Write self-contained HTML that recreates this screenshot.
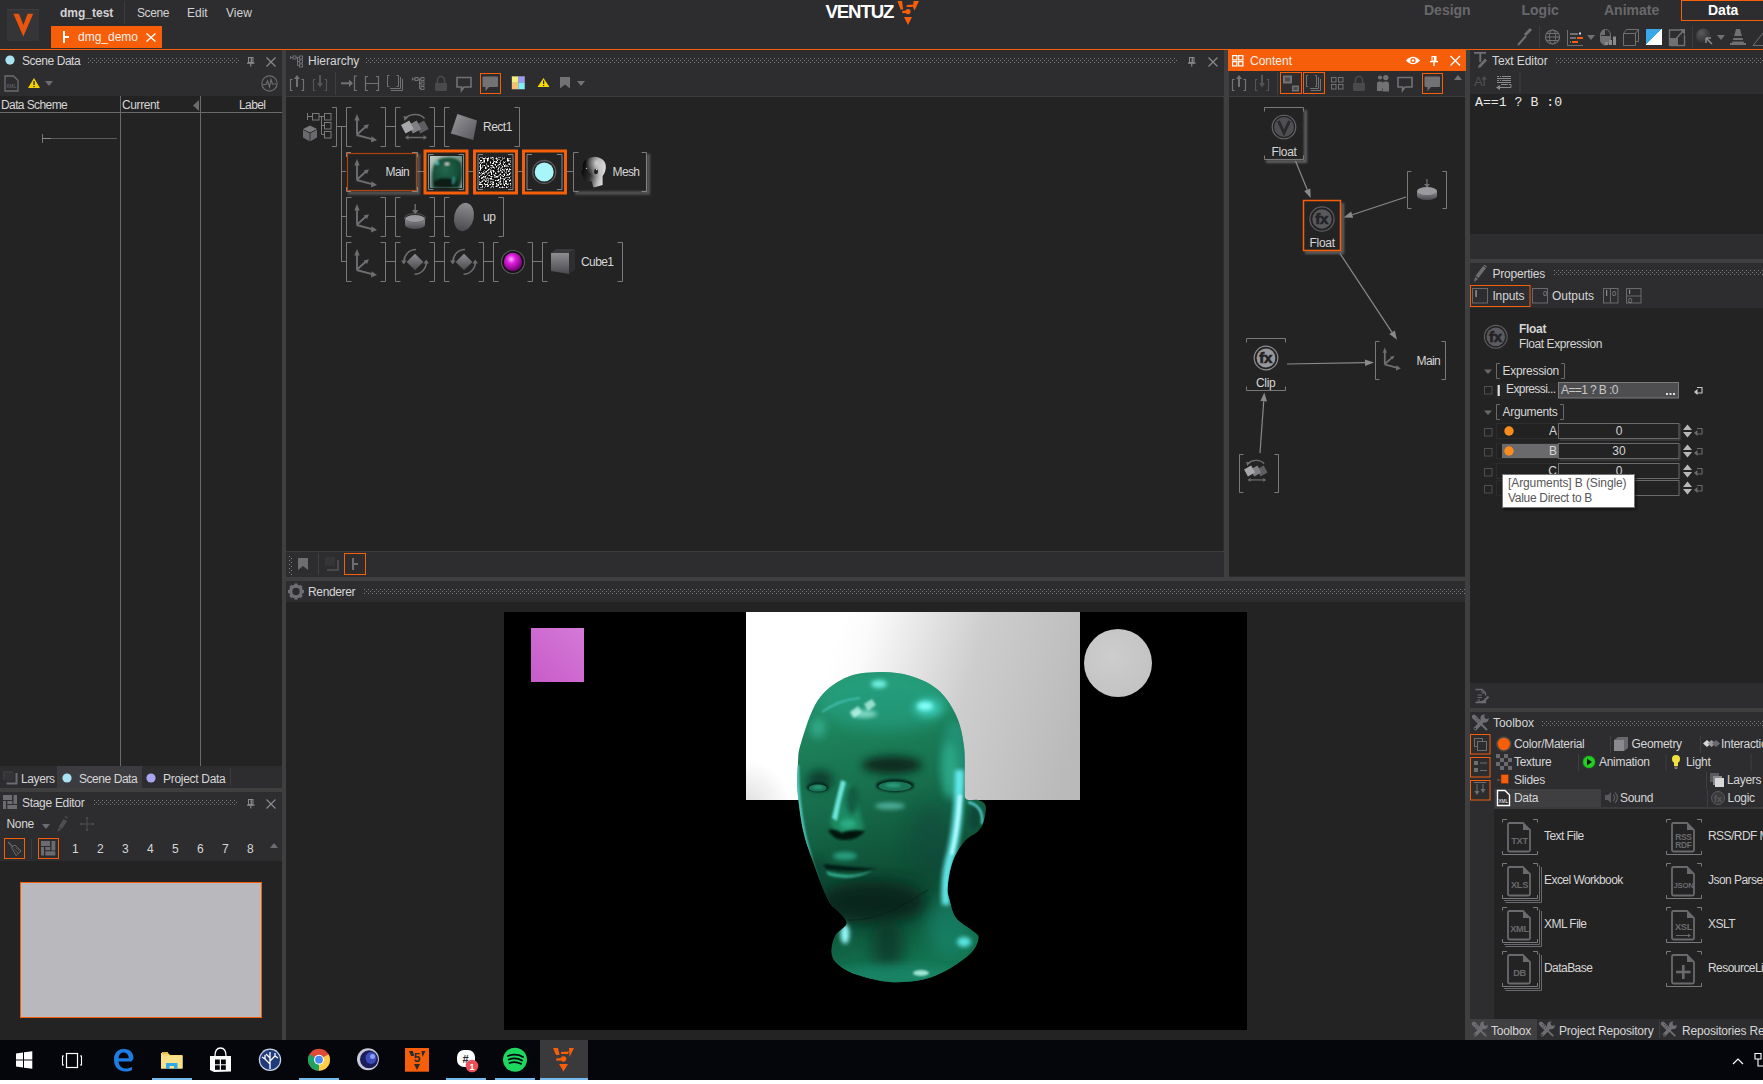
<!DOCTYPE html>
<html><head><meta charset="utf-8">
<style>
*{box-sizing:border-box;margin:0;padding:0}
html,body{width:1763px;height:1084px;overflow:hidden;background:#fff}
body{position:relative;font-family:"Liberation Sans",sans-serif;font-size:12px;color:#d6d6d6}
.a{position:absolute}
.t{position:absolute;white-space:nowrap;line-height:16px;font-size:12px;color:#d6d6d6}
svg{position:absolute;overflow:visible}
</style></head><body>
<svg width="0" height="0" style="left:0;top:0"><defs>
<pattern id="dotp" x="0" y="0" width="4" height="4" patternUnits="userSpaceOnUse"><rect x="0" y="0" width="1" height="1" fill="#7c7c7c"/><rect x="2" y="2" width="1" height="1" fill="#7c7c7c"/></pattern>
<linearGradient id="gGray" x1="0" y1="0" x2="1" y2="1"><stop offset="0" stop-color="#9a9a9e"/><stop offset="1" stop-color="#55555a"/></linearGradient>
<linearGradient id="gGray2" x1="0" y1="0" x2="0" y2="1"><stop offset="0" stop-color="#8e8e92"/><stop offset="1" stop-color="#4a4a4e"/></linearGradient>
<radialGradient id="gSphMag" cx="0.4" cy="0.35" r="0.65"><stop offset="0" stop-color="#ffb0ff"/><stop offset="0.35" stop-color="#e020e0"/><stop offset="1" stop-color="#700070"/></radialGradient>
<filter id="blurS" x="-20%" y="-20%" width="140%" height="140%"><feGaussianBlur stdDeviation="1.2"/></filter></defs></svg>
<div class="a" style="left:0px;top:0px;width:1763px;height:1080px;background:#2d2d30;"></div>
<div class="a" style="left:0px;top:49px;width:1763px;height:1px;background:#f65e0a;"></div>
<div class="a" style="left:0px;top:96px;width:282px;height:670px;background:#232323;"></div>
<div class="a" style="left:0px;top:788px;width:282px;height:4px;background:#3f3f3f;"></div>
<div class="a" style="left:0px;top:861px;width:282px;height:179px;background:#232323;"></div>
<div class="a" style="left:282px;top:50px;width:4px;height:990px;background:#3f3f3f;"></div>
<div class="a" style="left:286px;top:96px;width:938px;height:1px;background:#3c3c3e;"></div>
<div class="a" style="left:286px;top:97px;width:937px;height:454px;background:#232323;"></div>
<div class="a" style="left:286px;top:551px;width:938px;height:1px;background:#3c3c3e;"></div>
<div class="a" style="left:1224px;top:50px;width:5px;height:527px;background:#3f3f3f;"></div>
<div class="a" style="left:1228px;top:50px;width:238px;height:21px;background:#f65e0a;"></div>
<div class="a" style="left:1229px;top:96px;width:237px;height:1px;background:#3c3c3e;"></div>
<div class="a" style="left:1229px;top:97px;width:236px;height:479px;background:#232323;"></div>
<div class="a" style="left:286px;top:577px;width:1180px;height:4px;background:#3f3f3f;"></div>
<div class="a" style="left:1465px;top:50px;width:5px;height:990px;background:#3f3f3f;"></div>
<div class="a" style="left:286px;top:602px;width:1179px;height:438px;background:#232323;"></div>
<div class="a" style="left:504px;top:612px;width:743px;height:418px;background:#000;"></div>
<div class="a" style="left:1470px;top:94px;width:293px;height:140px;background:#232323;"></div>
<div class="a" style="left:1470px;top:259px;width:293px;height:4px;background:#3f3f3f;"></div>
<div class="a" style="left:1470px;top:308px;width:293px;height:375px;background:#232323;"></div>
<div class="a" style="left:1470px;top:708px;width:293px;height:4px;background:#3f3f3f;"></div>
<div class="a" style="left:1494px;top:809px;width:269px;height:210px;background:#232323;"></div>
<div class="a" style="left:0px;top:1040px;width:1763px;height:40px;background:#04060b;"></div>
<div class="a" style="left:7px;top:9px;width:32px;height:32px;background:#353537;border-top:1px solid #3d3d3f"></div>
<svg style="left:0px;top:0px;" width="50" height="45" viewBox="0 0 50 45"><polygon points="13.4,13.8 18.9,13.8 23.4,25 27.6,13.8 33.2,13.8 23.3,36.4" fill="#e8550f"/></svg>
<div class="t" style="left:60px;top:4.84px;font-size:12px;line-height:16px;color:#d2d2d2;font-weight:700;">dmg_test</div>
<div class="a" style="left:124px;top:1px;width:1px;height:23px;background:#3c3c40;"></div>
<div class="t" style="left:137px;top:4.84px;font-size:12px;line-height:16px;color:#d2d2d2;font-weight:400;letter-spacing:-0.4px">Scene</div>
<div class="t" style="left:187px;top:4.84px;font-size:12px;line-height:16px;color:#d2d2d2;font-weight:400;">Edit</div>
<div class="t" style="left:226px;top:4.84px;font-size:12px;line-height:16px;color:#d2d2d2;font-weight:400;">View</div>
<div class="a" style="left:51px;top:26px;width:111px;height:22px;background:#f65e0a;"></div>
<div class="a" style="left:63px;top:31px;width:2px;height:12px;background:#fff;"></div>
<div class="a" style="left:65px;top:36px;width:4px;height:2px;background:#fff;"></div>
<div class="t" style="left:78px;top:28.54px;font-size:12px;line-height:16px;color:#f6efe8;font-weight:400;">dmg_demo</div>
<svg style="left:146px;top:33px;" width="10" height="9" viewBox="0 0 10 9"><path d="M0.5,0.5 L9.5,8.5 M9.5,0.5 L0.5,8.5" stroke="#fff" stroke-width="1.3"/></svg>
<div class="t" style="left:825.5px;top:-0.04px;font-size:18.6px;line-height:24px;color:#ffffff;font-weight:700;letter-spacing:-1.1px">VENTUZ</div>
<svg style="left:896px;top:0px;" width="24" height="26" viewBox="0 0 24 26"><polygon points="1.5,1 6,1 7.2,9.5 4.5,9.5" fill="#f65e0a"/><polygon points="17.5,1 23,1 18.5,10.5 17,7" fill="#f65e0a"/><polygon points="10.7,5 17.5,4.5 16.5,7 10.5,7" fill="#f65e0a"/><circle cx="12" cy="11.6" r="2.6" fill="#f65e0a"/><polygon points="6,11 10,10.5 10,13 6.5,13.2" fill="#f65e0a"/><polygon points="8,17 16,17 12,25" fill="#f65e0a"/></svg>
<div class="t" style="left:1424px;top:1.15px;font-size:14px;line-height:18px;color:#68686b;font-weight:700;">Design</div>
<div class="t" style="left:1521.5px;top:1.15px;font-size:14px;line-height:18px;color:#68686b;font-weight:700;">Logic</div>
<div class="t" style="left:1604px;top:1.15px;font-size:14px;line-height:18px;color:#68686b;font-weight:700;">Animate</div>
<div class="a" style="left:1681px;top:0px;width:90px;height:21px;background:transparent;border:1.3px solid #f65e0a"></div>
<div class="t" style="left:1708px;top:0.75px;font-size:14px;line-height:18px;color:#ffffff;font-weight:700;">Data</div>
<svg style="left:0px;top:0px;" width="1763" height="50" viewBox="0 0 1763 50"><path d="M1518,45 L1526,36" stroke="#707073" stroke-width="2"/><path d="M1524,34 L1530,28 L1532,30 L1526,36 Z" fill="#707073"/><rect x="1539" y="26" width="1" height="22" fill="#3c3c40"/><circle cx="1552.5" cy="37" r="7" fill="none" stroke="#707073" stroke-width="1.2"/><ellipse cx="1552.5" cy="37" rx="3.2" ry="7" fill="none" stroke="#707073" stroke-width="1"/><path d="M1545.5,37 H1559.5 M1546.5,33.5 H1558.5 M1546.5,40.5 H1558.5" stroke="#707073" stroke-width="1"/><path d="M1567.5,30 V45.5 H1583" stroke="#707073" stroke-width="1" fill="none"/><rect x="1570" y="33" width="8" height="2" fill="#707073"/><rect x="1579" y="32.5" width="2" height="2" fill="#ddd"/><rect x="1570" y="37" width="6" height="2" fill="#707073"/><rect x="1577" y="37" width="6" height="2" fill="#f65e0a"/><rect x="1570" y="41" width="1" height="2" fill="#707073"/><rect x="1572" y="41" width="6" height="2" fill="#f65e0a"/><polygon points="1587,35 1595,35 1591,40" fill="#707073"/><path d="M1600.5,35 a5,5.5 0 0 1 10,0 V40 a5,5 0 0 1 -10,0 Z" fill="none" stroke="#707073" stroke-width="1"/><path d="M1600.5,35 a5,5.5 0 0 1 4.5,-5.5 V35 Z M1600.5,36 H1610.5 V40 a5,5 0 0 1 -10,0 Z" fill="#707073"/><rect x="1605" y="42" width="3" height="3" fill="#8a8a8d"/><rect x="1609" y="40" width="3" height="5" fill="#8a8a8d"/><rect x="1613" y="36.5" width="3" height="8.5" fill="#8a8a8d"/><path d="M1623.5,33.5 H1635.5 V45.5 H1623.5 Z M1626.5,29.5 H1638.5 V41.5 H1635.5 M1623.5,33.5 L1626.5,29.5 M1635.5,33.5 L1638.5,29.5" stroke="#707073" stroke-width="1" fill="none"/><rect x="1646" y="29" width="16" height="16" fill="#3aa8e8"/><polygon points="1662,29 1662,45 1646,45" fill="#fff"/><path d="M1646,45 L1662,29" stroke="#fff" stroke-width="1"/><path d="M1669.5,45.5 V30 H1680 M1684.5,35 V45.5 H1669.5" stroke="#707073" stroke-width="1.4" fill="none"/><rect x="1670" y="38" width="8" height="7" fill="#707073"/><path d="M1674,41 L1684,30" stroke="#707073" stroke-width="1.5"/><polygon points="1679,29 1685,29 1685,35" fill="#707073"/><rect x="1692" y="26" width="1" height="22" fill="#3c3c40"/><defs><radialGradient id="gSph" cx="0.35" cy="0.3" r="0.7"><stop offset="0" stop-color="#5a5a5d"/><stop offset="1" stop-color="#2e2e31"/></radialGradient></defs><circle cx="1703.5" cy="36" r="7.5" fill="url(#gSph)"/><path d="M1706,38 L1712,44 M1706,38 V43 M1706,38 H1711" stroke="#8a8a8d" stroke-width="1.5"/><polygon points="1717,35 1725,35 1721,40" fill="#707073"/><polygon points="1735,33 1741,33 1744,43 1746,43 1746,45 1730,45 1730,43 1732,43" fill="#707073"/><rect x="1733" y="36" width="10" height="2" fill="#2d2d30"/><rect x="1732" y="40" width="12" height="1.5" fill="#2d2d30"/><polygon points="1736,29 1740,29 1741,33 1735,33" fill="#707073"/><path d="M1753,45.5 H1763 M1753,45.5 L1763,33" stroke="#707073" stroke-width="1"/></svg>
<svg style="left:0px;top:50px;" width="20" height="22" viewBox="0 0 20 22"><circle cx="10" cy="10.1" r="4.6" fill="#a9e3f1"/></svg>
<div class="t" style="left:22px;top:52.84px;font-size:12px;line-height:16px;color:#d6d6d6;font-weight:400;letter-spacing:-0.45px">Scene Data</div>
<svg style="left:88px;top:58px" width="152" height="5"><rect width="152" height="5" fill="url(#dotp)"/></svg>
<svg style="left:245.5px;top:57px;" width="9" height="10" viewBox="0 0 9 10"><rect x="2.5" y="0.5" width="4.5" height="5" fill="none" stroke="#8a8a8d" stroke-width="1"/><rect x="4.6" y="1" width="1.3" height="4.5" fill="#8a8a8d"/><rect x="1" y="5.5" width="7.5" height="1.3" fill="#8a8a8d"/><rect x="4.2" y="6.5" width="1.1" height="3" fill="#8a8a8d"/></svg>
<svg style="left:266px;top:57px;" width="10" height="10" viewBox="0 0 10 10"><path d="M0.5,0.5 L9.5,9.5 M9.5,0.5 L0.5,9.5" stroke="#8a8a8d" stroke-width="1.2"/></svg>
<svg style="left:4px;top:75px;" width="15" height="17" viewBox="0 0 15 17"><path d="M1,1 H9.5 L14,5.5 V16 H1 Z" fill="none" stroke="#6c6c70" stroke-width="1.3"/><text x="2" y="12.5" font-size="5" fill="#6c6c70" font-family="Liberation Sans">XML</text></svg>
<svg style="left:28px;top:78px;" width="12" height="10" viewBox="0 0 12 10"><polygon points="6,0 12,10 0,10" fill="#f5d000"/><rect x="5.4" y="3" width="1.3" height="4" fill="#222"/><rect x="5.4" y="8" width="1.3" height="1.2" fill="#222"/></svg>
<svg style="left:45px;top:81px;" width="8" height="5" viewBox="0 0 8 5"><polygon points="0,0 8,0 4,5" fill="#6c6c70"/></svg>
<svg style="left:261px;top:75px;" width="17" height="17" viewBox="0 0 17 17"><circle cx="8.5" cy="8.5" r="7.6" fill="none" stroke="#6c6c70" stroke-width="1.2"/><path d="M2,9.5 H5 L6.5,6 L8.5,12 L10,4.5 L11.5,9 H15" fill="none" stroke="#6c6c70" stroke-width="1.2"/></svg>
<div class="t" style="left:1px;top:96.84px;font-size:12px;line-height:16px;color:#d6d6d6;font-weight:400;letter-spacing:-0.6px">Data Scheme</div>
<div class="t" style="left:122px;top:96.84px;font-size:12px;line-height:16px;color:#d6d6d6;font-weight:400;letter-spacing:-0.4px">Current</div>
<svg style="left:193px;top:100px;" width="7" height="12" viewBox="0 0 7 12"><polygon points="6,0 6,11 0,5.5" fill="#6c6c70"/></svg>
<div class="t" style="left:239px;top:97.34px;font-size:12px;line-height:16px;color:#d6d6d6;font-weight:400;letter-spacing:-0.6px">Label</div>
<div class="a" style="left:0px;top:112px;width:282px;height:1px;background:#6a6a6a;"></div>
<div class="a" style="left:120px;top:96px;width:1px;height:670px;background:#6a6a6a;"></div>
<div class="a" style="left:200px;top:96px;width:1px;height:670px;background:#6a6a6a;"></div>
<div class="a" style="left:42px;top:134px;width:1px;height:9px;background:#777;"></div>
<div class="a" style="left:42px;top:138px;width:75px;height:1px;background:#5a5a5a;"></div>
<div class="a" style="left:42px;top:138px;width:9px;height:1px;background:#888;"></div>
<div class="a" style="left:57px;top:766px;width:85px;height:22px;background:#3c3c40;"></div>
<svg style="left:3px;top:771px;" width="15" height="13" viewBox="0 0 15 13"><rect x="0" y="0" width="10" height="9" fill="#3a3a3d"/><path d="M3.5,12.5 H13.5 V2" stroke="#6c6c70" stroke-width="2" fill="none"/><rect x="2" y="2" width="9" height="8" fill="#333336"/></svg>
<div class="t" style="left:21px;top:770.84px;font-size:12px;line-height:16px;color:#d6d6d6;font-weight:400;letter-spacing:-0.4px">Layers</div>
<svg style="left:62px;top:773px;" width="10" height="10" viewBox="0 0 10 10"><circle cx="5" cy="5" r="4.6" fill="#a9e3f1"/></svg>
<div class="t" style="left:79px;top:770.84px;font-size:12px;line-height:16px;color:#d6d6d6;font-weight:400;letter-spacing:-0.45px">Scene Data</div>
<svg style="left:146px;top:773px;" width="10" height="10" viewBox="0 0 10 10"><circle cx="5" cy="5" r="4.6" fill="#a8a6f2"/></svg>
<div class="t" style="left:163px;top:770.84px;font-size:12px;line-height:16px;color:#d6d6d6;font-weight:400;letter-spacing:-0.3px">Project Data</div>
<div class="a" style="left:230px;top:768px;width:1px;height:18px;background:#3c3c40;"></div>
<svg style="left:3px;top:795px;" width="15" height="14" viewBox="0 0 15 14"><rect x="0" y="0" width="9" height="5" fill="#6c6c70"/><rect x="10.5" y="0" width="3.5" height="9" fill="#6c6c70"/><rect x="0" y="6" width="3" height="8" fill="#6c6c70"/><rect x="4.3" y="6" width="5" height="3" fill="#6c6c70"/><rect x="4.3" y="10" width="9.7" height="4" fill="#6c6c70"/></svg>
<div class="t" style="left:22px;top:794.84px;font-size:12px;line-height:16px;color:#d6d6d6;font-weight:400;letter-spacing:-0.3px">Stage Editor</div>
<svg style="left:94px;top:800px" width="143" height="5"><rect width="143" height="5" fill="url(#dotp)"/></svg>
<svg style="left:245.5px;top:799px;" width="9" height="10" viewBox="0 0 9 10"><rect x="2.5" y="0.5" width="4.5" height="5" fill="none" stroke="#8a8a8d" stroke-width="1"/><rect x="4.6" y="1" width="1.3" height="4.5" fill="#8a8a8d"/><rect x="1" y="5.5" width="7.5" height="1.3" fill="#8a8a8d"/><rect x="4.2" y="6.5" width="1.1" height="3" fill="#8a8a8d"/></svg>
<svg style="left:266px;top:799px;" width="10" height="10" viewBox="0 0 10 10"><path d="M0.5,0.5 L9.5,9.5 M9.5,0.5 L0.5,9.5" stroke="#8a8a8d" stroke-width="1.2"/></svg>
<div class="t" style="left:6.5px;top:815.84px;font-size:12px;line-height:16px;color:#d6d6d6;font-weight:400;letter-spacing:-0.3px">None</div>
<svg style="left:42px;top:824px;" width="8" height="5" viewBox="0 0 8 5"><polygon points="0,0 8,0 4,5" fill="#6c6c70"/></svg>
<svg style="left:57px;top:816px;" width="11" height="16" viewBox="0 0 11 16"><path d="M6.5,3 L10,5 L5,13 L1.5,11 Z" fill="#4e4e52"/><path d="M7.5,1 L8.5,0 L11,1.5 L10.3,2.7 Z" fill="#4e4e52"/><polygon points="1.2,11.8 4.5,13.6 0.5,15.5" fill="#4e4e52"/></svg>
<svg style="left:80px;top:817px;" width="14" height="14" viewBox="0 0 14 14"><path d="M7,0 V14 M0,7 H14" stroke="#4e4e52" stroke-width="1"/><polygon points="7,0 5.5,2 8.5,2" fill="#4e4e52"/><polygon points="7,14 5.5,12 8.5,12" fill="#4e4e52"/><polygon points="0,7 2,5.5 2,8.5" fill="#4e4e52"/><polygon points="14,7 12,5.5 12,8.5" fill="#4e4e52"/></svg>
<div class="a" style="left:4px;top:838px;width:21px;height:21px;background:transparent;border:1px solid #f65e0a"></div>
<svg style="left:7px;top:841px;" width="15" height="15" viewBox="0 0 15 15"><path d="M1,1 L6,6" stroke="#6c6c70" stroke-width="1.1"/><path d="M4.5,6.5 L8,4 L14,10 L9,14.5 Z" fill="none" stroke="#6c6c70" stroke-width="1"/><path d="M7,8 L11,12 M8.5,6.5 L12.5,10.5" stroke="#6c6c70" stroke-width="0.6"/></svg>
<div class="a" style="left:31px;top:839px;width:1px;height:20px;background:#3c3c40;"></div>
<div class="a" style="left:38px;top:838px;width:21px;height:21px;background:transparent;border:1px solid #f65e0a"></div>
<svg style="left:41px;top:841px;" width="15" height="15" viewBox="0 0 15 15"><rect x="0" y="0" width="9" height="5" fill="#6c6c70"/><rect x="10.5" y="0" width="3.8" height="9.5" fill="#6c6c70"/><rect x="0" y="6" width="3" height="8.5" fill="#6c6c70"/><rect x="4.3" y="6" width="5" height="3.2" fill="#6c6c70"/><rect x="4.3" y="10.3" width="10" height="4.2" fill="#6c6c70"/></svg>
<div class="t" style="left:72px;top:840.84px;font-size:12px;line-height:16px;color:#d6d6d6;font-weight:400;">1</div>
<div class="t" style="left:97px;top:840.84px;font-size:12px;line-height:16px;color:#d6d6d6;font-weight:400;">2</div>
<div class="t" style="left:122px;top:840.84px;font-size:12px;line-height:16px;color:#d6d6d6;font-weight:400;">3</div>
<div class="t" style="left:147px;top:840.84px;font-size:12px;line-height:16px;color:#d6d6d6;font-weight:400;">4</div>
<div class="t" style="left:172px;top:840.84px;font-size:12px;line-height:16px;color:#d6d6d6;font-weight:400;">5</div>
<div class="t" style="left:197px;top:840.84px;font-size:12px;line-height:16px;color:#d6d6d6;font-weight:400;">6</div>
<div class="t" style="left:222px;top:840.84px;font-size:12px;line-height:16px;color:#d6d6d6;font-weight:400;">7</div>
<div class="t" style="left:247px;top:840.84px;font-size:12px;line-height:16px;color:#d6d6d6;font-weight:400;">8</div>
<svg style="left:270px;top:843px;" width="8" height="5" viewBox="0 0 8 5"><polygon points="0,5 8,5 4,0" fill="#6c6c70"/></svg>
<div class="a" style="left:20px;top:882px;width:242px;height:136px;background:#b9b8bd;border:1px solid #f65e0a"></div>
<svg style="left:290px;top:55px;" width="13" height="12" viewBox="0 0 13 12"><path d="M0.5,1 V4 M0.5,2.5 H3 M6,2.5 H9.5 M7.5,2.5 V10.5 H9.5 M7.5,6.5 H9.5" stroke="#6e6e72" stroke-width="1" fill="none"/><rect x="3" y="1" width="3" height="3" fill="none" stroke="#6e6e72" stroke-width="1"/><rect x="9.5" y="1" width="3" height="3" fill="none" stroke="#6e6e72" stroke-width="1"/><rect x="9.5" y="5" width="3" height="3" fill="none" stroke="#6e6e72" stroke-width="1"/><rect x="9.5" y="9" width="3" height="3" fill="none" stroke="#6e6e72" stroke-width="1"/></svg>
<div class="t" style="left:308px;top:52.84px;font-size:12px;line-height:16px;color:#d6d6d6;font-weight:400;">Hierarchy</div>
<svg style="left:366px;top:58px" width="812" height="5"><rect width="812" height="5" fill="url(#dotp)"/></svg>
<svg style="left:1187px;top:57px;" width="9" height="10" viewBox="0 0 9 10"><rect x="2.5" y="0.5" width="4.5" height="5" fill="none" stroke="#8a8a8d" stroke-width="1"/><rect x="4.6" y="1" width="1.3" height="4.5" fill="#8a8a8d"/><rect x="1" y="5.5" width="7.5" height="1.3" fill="#8a8a8d"/><rect x="4.2" y="6.5" width="1.1" height="3" fill="#8a8a8d"/></svg>
<svg style="left:1208px;top:57px;" width="10" height="10" viewBox="0 0 10 10"><path d="M0.5,0.5 L9.5,9.5 M9.5,0.5 L0.5,9.5" stroke="#8a8a8d" stroke-width="1.2"/></svg>
<svg style="left:0px;top:0px;" width="1763" height="100" viewBox="0 0 1763 100"><path d="M292.5,79.5 H290.5 V90.5 H292.5 M301.5,79.5 H303.5 V90.5 H301.5" stroke="#727275" stroke-width="1.2" fill="none"/><rect x="296" y="78" width="2" height="9" fill="#727275"/><polygon points="294,79 297,75 300,79" fill="#727275"/><path d="M315.5,79.5 H313.5 V90.5 H315.5 M324.5,79.5 H326.5 V90.5 H324.5" stroke="#545457" stroke-width="1.2" fill="none"/><rect x="319" y="75" width="2" height="9" fill="#545457"/><polygon points="317,83 320,87.5 323,83" fill="#545457"/><rect x="335" y="72" width="1" height="23" fill="#3f3f42"/><rect x="341" y="82.3" width="9" height="2" fill="#727275"/><polygon points="349,79.5 353,83.3 349,87" fill="#727275"/><path d="M357,76 H354.5 V90.5 H357" stroke="#727275" stroke-width="1.2" fill="none"/><path d="M368,76.5 H365.5 V90.5 H368 M376,76.5 H378.5 V90.5 H376 M365.5,83.5 H378.5" stroke="#727275" stroke-width="1.2" fill="none"/><path d="M389.5,75.5 H387.5 V86.5 H389.5 M396.5,75.5 H398.5 V86.5 H396.5 M390,88.5 H400.5 V77 M391,90.5 H402.5 V79" stroke="#727275" stroke-width="1" fill="none"/><path d="M412.5,77.5 V80.5 M412.5,79 H415 M418,79 H421 M419.5,79 V88.5 H421 M419.5,83.5 H421" stroke="#727275" stroke-width="1" fill="none"/><rect x="415" y="77.5" width="3" height="3" fill="none" stroke="#727275"/><rect x="421" y="77.5" width="3" height="3" fill="none" stroke="#727275"/><rect x="421" y="82" width="3" height="3" fill="none" stroke="#727275"/><rect x="421" y="86.5" width="3" height="3" fill="none" stroke="#727275"/><path d="M437.5,84 V80 a3.5,3.5 0 0 1 7,0 V84" stroke="#4a4a4d" stroke-width="1.6" fill="none"/><rect x="435" y="83" width="12" height="8" rx="1" fill="#4a4a4d"/><path d="M457,77.5 H471 V87 H464 L461.5,90.5 V87 H457 Z" stroke="#727275" stroke-width="1.6" fill="none"/><rect x="480.5" y="73.5" width="20" height="20" fill="none" stroke="#f65e0a" stroke-width="1"/><path d="M482.5,77.5 a1,1 0 0 1 1,-1 H497 a1,1 0 0 1 1,1 V86 a1,1 0 0 1 -1,1 H489 L485.5,91 V87 H483.5 a1,1 0 0 1 -1,-1 Z" fill="#727275"/><rect x="511.5" y="76" width="13.5" height="13.5" fill="#666"/><rect x="512" y="76.5" width="6.3" height="6.3" fill="#f5ee7a"/><rect x="518.3" y="76.5" width="6.3" height="6.3" fill="#9c9cf6"/><rect x="512" y="82.8" width="6.3" height="6.3" fill="#f6c070"/><rect x="518.3" y="82.8" width="6.3" height="6.3" fill="#80eef8"/><polygon points="543.5,78 549.5,87 537.5,87" fill="#f5d800"/><rect x="543" y="80.5" width="1.2" height="3.5" fill="#222"/><rect x="543" y="85" width="1.2" height="1.1" fill="#222"/><polygon points="560,77 570,77 570,88.5 565,84.5 560,88.5" fill="#727275"/><polygon points="577,81 585,81 581,86" fill="#727275"/></svg>
<svg style="left:0px;top:0px;" width="1763" height="600" viewBox="0 0 1763 600"><g stroke="#7a7a7d" stroke-width="1" fill="none"><path d="M307.5,113 V120 M307.5,116.5 H312 M319,116.5 H324 M321.5,116.5 V134.5 H324 M321.5,125.5 H324"/><rect x="312.5" y="113.5" width="6.5" height="6.5"/><rect x="324.5" y="113.5" width="6.5" height="6.5"/><rect x="324.5" y="122.5" width="6.5" height="6.5"/><rect x="324.5" y="131.5" width="6.5" height="6.5"/></g><polygon points="303,129 310,125.5 317,129 310,132.5" fill="#7a7a7e"/><polygon points="303,129.7 309.6,133.3 309.6,141.3 303,137.5" fill="#6a6a6e"/><polygon points="310.4,133.3 317,129.7 317,137.5 310.4,141.3" fill="#6a6a6e"/><path d="M332,107.5 H336.5 V146.5 H332" stroke="#7a7a7d" fill="none"/><rect x="336" y="126" width="10" height="1" fill="#7a7a7d"/><rect x="341" y="126" width="1" height="136" fill="#7a7a7d"/><rect x="341" y="171" width="5" height="1" fill="#7a7a7d"/><rect x="341" y="216" width="5" height="1" fill="#7a7a7d"/><rect x="341" y="261" width="5" height="1" fill="#7a7a7d"/><path d="M351.5,107.5 H346.5 V146.5 H351.5 M380.5,107.5 H385.5 V146.5 H380.5" stroke="#7a7a7d" stroke-width="1" fill="none"/><g transform="translate(346,107)"><path d="M11,27.5 V12 M11,27.5 L20,19.5 M10.5,28 L27,32.3" stroke="#6e6e72" stroke-width="1.9" fill="none"/><polygon points="8.3,13.5 11,7 13.7,13.5" fill="#6e6e72"/><polygon points="17.5,18.5 23,17.2 21,22" fill="#6e6e72"/><polygon points="25.5,29.2 31,33 25,35.5" fill="#6e6e72"/></g><rect x="386" y="126" width="9" height="1" fill="#7a7a7d"/><path d="M400.5,107.5 H395.5 V146.5 H400.5 M429.5,107.5 H434.5 V146.5 H429.5" stroke="#7a7a7d" stroke-width="1" fill="none"/><rect x="435" y="126" width="9" height="1" fill="#7a7a7d"/><g transform="translate(395,107)"><path d="M29.5,11.5 A11,8 0 0 0 11,11" stroke="#6e6e72" stroke-width="1.5" fill="none"/><polygon points="8.5,9 13.5,10 9.5,14" fill="#6e6e72"/><polygon points="33.6,21.9 25.3,26.4 20.8,18.1 29.1,13.6" fill="#5e5e62"/><polygon points="26.2,21.9 17.9,26.4 13.4,18.1 21.7,13.6" fill="#808084"/><polygon points="18.8,21.9 10.5,26.4 6.0,18.1 14.3,13.6" fill="#a8a8ac"/><path d="M12,30.5 H30" stroke="#6a6a6e" stroke-width="1.5"/><polygon points="10,30.5 13.5,28 13.5,33" fill="#6a6a6e"/><polygon points="32,30.5 28.5,28 28.5,33" fill="#6a6a6e"/></g><path d="M449.5,107.5 H444.5 V146.5 H449.5 M514.5,107.5 H519.5 V146.5 H514.5" stroke="#7a7a7d" stroke-width="1" fill="none"/><polygon points="457.4,114 477,120.6 473.3,140 450.8,133.5" fill="url(#gGray)"/></svg>
<div class="t" style="left:483px;top:118.84px;font-size:12px;line-height:16px;color:#d6d6d6;font-weight:400;letter-spacing:-0.5px">Rect1</div>
<svg style="left:0px;top:0px;" width="1763" height="600" viewBox="0 0 1763 600"><path d="M348,193 H418.5 V154" stroke="rgba(170,170,170,0.4)" stroke-width="3" fill="none" filter="url(#blurS)"/><path d="M346.5,157 V152.5 H351 M412,152.5 H417.5 V157 M346.5,187 V191.5 H351 M412,191.5 H417.5 V187" stroke="#8a8a8d" fill="none"/><rect x="347.5" y="153.5" width="69" height="37" fill="none" stroke="#b0420c" stroke-width="1.2"/><g transform="translate(346,152)"><path d="M11,27.5 V12 M11,27.5 L20,19.5 M10.5,28 L27,32.3" stroke="#6e6e72" stroke-width="1.9" fill="none"/><polygon points="8.3,13.5 11,7 13.7,13.5" fill="#6e6e72"/><polygon points="17.5,18.5 23,17.2 21,22" fill="#6e6e72"/><polygon points="25.5,29.2 31,33 25,35.5" fill="#6e6e72"/></g><rect x="417" y="171" width="7" height="1" fill="#7a7a7d"/><rect x="425" y="151" width="42" height="42" fill="none" stroke="#f65e0a" stroke-width="3"/><path d="M433.5,154.5 H428.5 V189.5 H433.5 M458.5,154.5 H463.5 V189.5 H458.5" stroke="#7a8a90" stroke-width="1" fill="none"/><rect x="467" y="171" width="6" height="1" fill="#7a7a7d"/><rect x="474.5" y="151" width="42" height="42" fill="none" stroke="#f65e0a" stroke-width="3"/><path d="M483.0,154.5 H478.0 V189.5 H483.0 M508.0,154.5 H513.0 V189.5 H508.0" stroke="#7a8a90" stroke-width="1" fill="none"/><rect x="517" y="171" width="5" height="1" fill="#7a7a7d"/><rect x="523.5" y="151" width="42" height="42" fill="none" stroke="#f65e0a" stroke-width="3"/><path d="M532.0,154.5 H527.0 V189.5 H532.0 M557.0,154.5 H562.0 V189.5 H557.0" stroke="#7a8a90" stroke-width="1" fill="none"/><rect x="566" y="171" width="7" height="1" fill="#7a7a7d"/><path d="M578.5,152.5 H573.5 V191.5 H578.5 M641.5,152.5 H646.5 V191.5 H641.5" stroke="#7a7a7d" stroke-width="1" fill="none"/><path d="M575,193 H648.5 V154" stroke="rgba(170,170,170,0.4)" stroke-width="3" fill="none" filter="url(#blurS)"/><defs><radialGradient id="gThumb" cx="0.45" cy="0.4" r="0.6"><stop offset="0" stop-color="#22684e"/><stop offset="0.7" stop-color="#174f3a"/><stop offset="1" stop-color="#0f3426"/></radialGradient><linearGradient id="gThumbBg" x1="0" y1="0" x2="1" y2="1"><stop offset="0" stop-color="#c4ccc4"/><stop offset="0.5" stop-color="#6f9484"/><stop offset="1" stop-color="#8aa494"/></linearGradient><filter id="tb1"><feGaussianBlur stdDeviation="1.2"/></filter></defs><rect x="430" y="156" width="32" height="32" fill="url(#gThumbBg)"/><g filter="url(#tb1)"><path d="M433,188 C431,175 432,163 438,160 C446,156 456,157 461,163 C463,172 462,182 459,188 Z" fill="url(#gThumb)"/><ellipse cx="445" cy="183" rx="11" ry="5" fill="#0e1a14"/><circle cx="437" cy="163" r="1.8" fill="#5ad0c8"/><rect x="445" y="163" width="4" height="2" fill="#cfe0d8"/><path d="M454,177 L453,184" stroke="#48b8b0" stroke-width="1.2"/></g><defs><filter id="fNoise" x="0" y="0" width="100%" height="100%"><feTurbulence type="fractalNoise" baseFrequency="0.55" numOctaves="2" seed="11"/><feColorMatrix type="matrix" values="0 0 0 0 0  0 0 0 0 0  0 0 0 0 0  1.2 0 0 0 -0.1"/><feComponentTransfer><feFuncA type="discrete" tableValues="0 0 0 0.5 1 1"/></feComponentTransfer><feColorMatrix type="matrix" values="0 0 0 0 1  0 0 0 0 1  0 0 0 0 1  0 0 0 1 0"/></filter></defs><rect x="479" y="157" width="32" height="31" fill="#141414"/><rect x="479" y="157" width="32" height="31" filter="url(#fNoise)"/><circle cx="544.2" cy="172" r="11.5" fill="none" stroke="#5a5a5e" stroke-width="1.3"/><circle cx="544.2" cy="172" r="9.5" fill="#a8f6fa"/><defs><linearGradient id="gHead" x1="0" y1="0.2" x2="1" y2="0.5"><stop offset="0" stop-color="#000"/><stop offset="0.45" stop-color="#2e2e2e"/><stop offset="0.78" stop-color="#b8b8b8"/><stop offset="1" stop-color="#e4e4e4"/></linearGradient><radialGradient id="gHeadHi" cx="0.62" cy="0.2" r="0.45"><stop offset="0" stop-color="#f4f4f4" stop-opacity="0.75"/><stop offset="1" stop-color="#f4f4f4" stop-opacity="0"/></radialGradient></defs><path d="M594.5,156.8 C600,157 605.5,160 605.8,166 C606,171 604,174.5 602.6,176 L602.6,185 L593.7,187.4 C592.5,185 592.2,183 591.9,181.5 C588,181 585.5,180.5 584.1,180 L583,176 L582,174.5 L581.2,172 L583,169 C582.5,166 583,163 583.4,163 C584.5,160 587,158 594.5,156.8 Z" fill="url(#gHead)"/><path d="M594.5,156.8 C600,157 605.5,160 605.8,166 C606,171 604,174.5 602.6,176 L602.6,185 L593.7,187.4 C592.5,185 592.2,183 591.9,181.5 C588,181 585.5,180.5 584.1,180 L583,176 L582,174.5 L581.2,172 L583,169 C582.5,166 583,163 583.4,163 C584.5,160 587,158 594.5,156.8 Z" fill="url(#gHeadHi)"/><ellipse cx="596" cy="171.5" rx="2" ry="2.8" fill="#222"/><circle cx="596.6" cy="169.5" r="0.8" fill="#ddd"/><circle cx="586.5" cy="168.5" r="0.7" fill="#bbb"/></svg>
<div class="t" style="left:385.5px;top:163.84px;font-size:12px;line-height:16px;color:#d6d6d6;font-weight:400;letter-spacing:-0.6px">Main</div>
<div class="t" style="left:612.5px;top:163.84px;font-size:12px;line-height:16px;color:#d6d6d6;font-weight:400;letter-spacing:-0.6px">Mesh</div>
<svg style="left:0px;top:0px;" width="1763" height="600" viewBox="0 0 1763 600"><path d="M351.5,197.5 H346.5 V236.5 H351.5 M380.5,197.5 H385.5 V236.5 H380.5" stroke="#7a7a7d" stroke-width="1" fill="none"/><g transform="translate(346,197)"><path d="M11,27.5 V12 M11,27.5 L20,19.5 M10.5,28 L27,32.3" stroke="#6e6e72" stroke-width="1.9" fill="none"/><polygon points="8.3,13.5 11,7 13.7,13.5" fill="#6e6e72"/><polygon points="17.5,18.5 23,17.2 21,22" fill="#6e6e72"/><polygon points="25.5,29.2 31,33 25,35.5" fill="#6e6e72"/></g><rect x="386" y="216" width="9" height="1" fill="#7a7a7d"/><path d="M400.5,197.5 H395.5 V236.5 H400.5 M429.5,197.5 H434.5 V236.5 H429.5" stroke="#7a7a7d" stroke-width="1" fill="none"/><rect x="435" y="216" width="9" height="1" fill="#7a7a7d"/><g><rect x="414.5" y="204" width="1.4" height="8" fill="#6e6e72"/><polygon points="412,210 415.2,214.5 418.4,210" fill="#6e6e72"/><path d="M405,219 V225 A10,4 0 0 0 425,225 V219 Z" fill="url(#gGray2)"/><ellipse cx="415" cy="219" rx="10" ry="4" fill="#9a9a9e"/><ellipse cx="415" cy="218" rx="10.5" ry="4.5" fill="none" stroke="#5a5a5e" stroke-width="0.8"/></g><path d="M449.5,197.5 H444.5 V236.5 H449.5 M498.5,197.5 H503.5 V236.5 H498.5" stroke="#7a7a7d" stroke-width="1" fill="none"/><ellipse cx="464" cy="217" rx="9.8" ry="14.3" transform="rotate(12 464 217)" fill="url(#gGray2)"/><path d="M351.5,242.5 H346.5 V281.5 H351.5 M380.5,242.5 H385.5 V281.5 H380.5" stroke="#7a7a7d" stroke-width="1" fill="none"/><g transform="translate(346,242)"><path d="M11,27.5 V12 M11,27.5 L20,19.5 M10.5,28 L27,32.3" stroke="#6e6e72" stroke-width="1.9" fill="none"/><polygon points="8.3,13.5 11,7 13.7,13.5" fill="#6e6e72"/><polygon points="17.5,18.5 23,17.2 21,22" fill="#6e6e72"/><polygon points="25.5,29.2 31,33 25,35.5" fill="#6e6e72"/></g><rect x="386" y="261" width="9" height="1" fill="#7a7a7d"/><path d="M400.5,242.5 H395.5 V281.5 H400.5 M429.5,242.5 H434.5 V281.5 H429.5" stroke="#7a7a7d" stroke-width="1" fill="none"/><g transform="translate(415,262)"><polygon points="0,-8.3 8.3,0 0,8.3 -8.3,0" fill="url(#gGray2)"/><path d="M1,-12.5 A12,12 0 0 0 -11,-0.5" stroke="#6e6e72" stroke-width="1.6" fill="none"/><polygon points="-14,-1.5 -8.5,-1.5 -11.2,2.5" fill="#6e6e72"/><path d="M-0.5,12.3 A12,12 0 0 0 11.3,0.5" stroke="#6e6e72" stroke-width="1.6" fill="none"/><polygon points="14,1.5 8.5,1.5 11.2,-2.5" fill="#6e6e72"/></g><rect x="435" y="261" width="9" height="1" fill="#7a7a7d"/><path d="M449.5,242.5 H444.5 V281.5 H449.5 M478.5,242.5 H483.5 V281.5 H478.5" stroke="#7a7a7d" stroke-width="1" fill="none"/><g transform="translate(464,262)"><polygon points="0,-8.3 8.3,0 0,8.3 -8.3,0" fill="url(#gGray2)"/><path d="M1,-12.5 A12,12 0 0 0 -11,-0.5" stroke="#6e6e72" stroke-width="1.6" fill="none"/><polygon points="-14,-1.5 -8.5,-1.5 -11.2,2.5" fill="#6e6e72"/><path d="M-0.5,12.3 A12,12 0 0 0 11.3,0.5" stroke="#6e6e72" stroke-width="1.6" fill="none"/><polygon points="14,1.5 8.5,1.5 11.2,-2.5" fill="#6e6e72"/></g><rect x="484" y="261" width="9" height="1" fill="#7a7a7d"/><path d="M498.5,242.5 H493.5 V281.5 H498.5 M527.5,242.5 H532.5 V281.5 H527.5" stroke="#7a7a7d" stroke-width="1" fill="none"/><rect x="533" y="261" width="9" height="1" fill="#7a7a7d"/><circle cx="513" cy="262" r="11.5" fill="#111" stroke="#5a5a5e" stroke-width="1.2"/><circle cx="513" cy="262" r="9.2" fill="url(#gSphMag)"/><path d="M547.5,242.5 H542.5 V281.5 H547.5 M617.5,242.5 H622.5 V281.5 H617.5" stroke="#7a7a7d" stroke-width="1" fill="none"/><polygon points="551,253 556,249 575,249 569,253" fill="#3a3a3d"/><polygon points="569,253 575,249 575,270 569,274" fill="#2e2e31"/><polygon points="551,253 569,253 569,274 551,271" fill="url(#gGray2)"/></svg>
<div class="t" style="left:483px;top:208.84px;font-size:12px;line-height:16px;color:#d6d6d6;font-weight:400;letter-spacing:-0.4px">up</div>
<div class="t" style="left:581px;top:253.84px;font-size:12px;line-height:16px;color:#d6d6d6;font-weight:400;letter-spacing:-0.6px">Cube1</div>
<svg style="left:0px;top:0px;" width="1763" height="600" viewBox="0 0 1763 600"><rect x="289" y="556" width="1" height="1" fill="#8a8a8a"/><rect x="291" y="558" width="1" height="1" fill="#8a8a8a"/><rect x="289" y="560" width="1" height="1" fill="#8a8a8a"/><rect x="291" y="562" width="1" height="1" fill="#8a8a8a"/><rect x="289" y="564" width="1" height="1" fill="#8a8a8a"/><rect x="291" y="566" width="1" height="1" fill="#8a8a8a"/><rect x="289" y="568" width="1" height="1" fill="#8a8a8a"/><rect x="291" y="570" width="1" height="1" fill="#8a8a8a"/><rect x="289" y="572" width="1" height="1" fill="#8a8a8a"/><rect x="291" y="574" width="1" height="1" fill="#8a8a8a"/><polygon points="298,558 308,558 308,570 303,566 298,570" fill="#6e6e72"/><rect x="318" y="553" width="1" height="22" fill="#3f3f42"/><rect x="325" y="557" width="10" height="9" fill="#353538"/><path d="M327,570 H338 V560" stroke="#4a4a4d" stroke-width="2" fill="none"/><rect x="344.5" y="553.5" width="21" height="21" fill="none" stroke="#f65e0a"/><rect x="352" y="558" width="2" height="12" fill="#6e6e72"/><rect x="354" y="563" width="4" height="2" fill="#6e6e72"/></svg>
<svg style="left:0px;top:0px;" width="1763" height="600" viewBox="0 0 1763 600"><g fill="none" stroke="#fff" stroke-width="1.2"><rect x="1232.6" y="55.6" width="4.3" height="4.3"/><rect x="1238.6" y="55.6" width="4.3" height="4.3"/><rect x="1232.6" y="61.6" width="4.3" height="4.3"/><rect x="1238.6" y="61.6" width="4.3" height="4.3"/></g><path d="M1406,60.5 Q1413,53 1420,60.5 Q1413,68 1406,60.5 Z" fill="#fff"/><circle cx="1413" cy="60.5" r="2.6" fill="#f65e0a"/><circle cx="1413" cy="60.5" r="1.2" fill="#fff"/><rect x="1431.5" y="56" width="5" height="5.5" fill="#fff"/><rect x="1430" y="61" width="8" height="1.3" fill="#fff"/><rect x="1433.3" y="62" width="1.4" height="4" fill="#fff"/><rect x="1432.5" y="57" width="1.3" height="3.5" fill="#f65e0a"/><path d="M1450.5,56 L1460,65.5 M1460,56 L1450.5,65.5" stroke="#fff" stroke-width="1.4"/><path d="M1234.5,79.5 H1232.5 V90.5 H1234.5 M1243.5,79.5 H1245.5 V90.5 H1243.5" stroke="#727275" stroke-width="1.2" fill="none"/><rect x="1238" y="78" width="2" height="9" fill="#727275"/><polygon points="1236,79 1239,75 1242,79" fill="#727275"/><path d="M1257.5,79.5 H1255.5 V90.5 H1257.5 M1266.5,79.5 H1268.5 V90.5 H1266.5" stroke="#545457" stroke-width="1.2" fill="none"/><rect x="1261" y="75" width="2" height="9" fill="#545457"/><polygon points="1259,83 1262,87.5 1265,83" fill="#545457"/><rect x="1277" y="72" width="1" height="23" fill="#3f3f42"/><rect x="1280.5" y="72.5" width="21" height="21" fill="none" stroke="#f65e0a"/><rect x="1303.5" y="72.5" width="21" height="21" fill="none" stroke="#f65e0a"/><rect x="1283" y="75.5" width="9" height="8" fill="#727275"/><rect x="1285" y="77.5" width="5" height="4" fill="#4a4a4d"/><rect x="1292" y="85.5" width="7" height="6" fill="#727275"/><rect x="1293.5" y="87" width="4" height="3" fill="#4a4a4d"/><path d="M1308,75.5 H1306.5 V86.5 H1308 M1315,75.5 H1316.5 V86.5 H1315 M1310,88.5 H1318.5 V77 M1311,90.5 H1320.5 V79" stroke="#727275" stroke-width="1" fill="none"/><g fill="none" stroke="#727275" stroke-width="1"><rect x="1331.5" y="77.5" width="4.5" height="4.5"/><rect x="1338.5" y="77.5" width="4.5" height="4.5"/><rect x="1331.5" y="84.5" width="4.5" height="4.5"/><rect x="1338.5" y="84.5" width="4.5" height="4.5"/></g><path d="M1355.5,84 V80 a3.5,3.5 0 0 1 7,0 V84" stroke="#4a4a4d" stroke-width="1.6" fill="none"/><rect x="1353" y="83" width="12" height="8" rx="1" fill="#4a4a4d"/><circle cx="1380" cy="77.5" r="2.1" fill="#727275"/><path d="M1377,91 V83.5 a2,2 0 0 1 2,-2 H1381 a2,2 0 0 1 2,2 V88 H1382 V91 Z" fill="#727275"/><circle cx="1385.8" cy="77.6" r="2.7" fill="#727275"/><path d="M1382.5,91.5 V84 a2.5,2.5 0 0 1 2.5,-2.5 H1386.5 a2.5,2.5 0 0 1 2.5,2.5 V91.5 Z" fill="#727275"/><path d="M1398,77.5 H1412 V87 H1405 L1402.5,90.5 V87 H1398 Z" stroke="#727275" stroke-width="1.6" fill="none"/><rect x="1422.5" y="73.5" width="20" height="20" fill="none" stroke="#f65e0a" stroke-width="1"/><path d="M1424.5,77.5 a1,1 0 0 1 1,-1 H1439 a1,1 0 0 1 1,1 V86 a1,1 0 0 1 -1,1 H1431 L1427.5,91 V87 H1425.5 a1,1 0 0 1 -1,-1 Z" fill="#727275"/><polygon points="1454,80 1462,80 1458,75" fill="#727275"/><path d="M1266,161.5 H1305.5 V110" stroke="rgba(170,170,170,0.45)" stroke-width="3" fill="none" filter="url(#blurS)"/><path d="M1264.5,111.5 V107.5 H1303.5 V111.5 M1264.5,155.5 V159.5 H1303.5 V155.5" stroke="#7a7a7d" fill="none"/><circle cx="1284" cy="127" r="11.8" fill="none" stroke="#6a6a6e" stroke-width="1.1"/><circle cx="1284" cy="127" r="10" fill="#4f4f53"/><path d="M1278.5,121 L1284,133 L1289.5,121" stroke="#2a2a2c" stroke-width="3" fill="none"/><path d="M1295.5,161 L1307.3,189.7" stroke="#8a8a8d" stroke-width="1.2"/><polygon points="1310.7,198 1304.2,190.9 1310.3,188.4" fill="#8a8a8d"/><path d="M1305,252.5 H1342.5 V203" stroke="rgba(170,170,170,0.45)" stroke-width="3" fill="none" filter="url(#blurS)"/><rect x="1303.5" y="200.5" width="37" height="50" fill="none" stroke="#f65e0a" stroke-width="1.5"/><circle cx="1322" cy="219" r="12.1" fill="none" stroke="#5c5c60" stroke-width="1.2"/><circle cx="1322" cy="219" r="9.7" fill="#59595d"/><text x="1315.2" y="223.8" font-family="Liberation Sans" font-weight="700" font-size="15" fill="#232325" stroke="#232325" stroke-width="0.7" letter-spacing="-0.2">fx</text><path d="M1411.5,171.5 H1407.5 V208.5 H1411.5 M1442.5,171.5 H1446.5 V208.5 H1442.5" stroke="#7a7a7d" fill="none"/><rect x="1426.3" y="179" width="1.3" height="7" fill="#6e6e72"/><polygon points="1424,184 1427,188 1430,184" fill="#6e6e72"/><path d="M1417,191 V196 A10,4 0 0 0 1437,196 V191 Z" fill="url(#gGray2)"/><ellipse cx="1427" cy="191" rx="10" ry="4" fill="#9a9a9e"/><path d="M1406,197 L1352.2,214.7" stroke="#8a8a8d" stroke-width="1.2"/><polygon points="1343.6,217.5 1351.1,211.6 1353.2,217.8" fill="#8a8a8d"/><path d="M1340,253.5 L1392.0,332.3" stroke="#8a8a8d" stroke-width="1.2"/><polygon points="1397,339.8 1389.3,334.1 1394.8,330.5" fill="#8a8a8d"/><path d="M1379.5,341.5 H1375.5 V379.5 H1379.5 M1441.5,341.5 H1445.5 V379.5 H1441.5" stroke="#7a7a7d" fill="none"/><g transform="translate(1376,342) scale(0.8)"><path d="M11,27.5 V12 M11,27.5 L20,19.5 M10.5,28 L27,32.3" stroke="#6e6e72" stroke-width="2.2" fill="none"/><polygon points="8.3,13.5 11,7 13.7,13.5" fill="#6e6e72"/><polygon points="17.5,18.5 23,17.2 21,22" fill="#6e6e72"/><polygon points="25.5,29.2 31,33 25,35.5" fill="#6e6e72"/></g><path d="M1246.5,342.5 V338.5 H1285.5 V342.5 M1246.5,386.5 V390.5 H1285.5 V386.5" stroke="#7a7a7d" fill="none"/><circle cx="1266" cy="358" r="11.8" fill="none" stroke="#8e8e92" stroke-width="1.2"/><circle cx="1266" cy="358" r="9.4" fill="#98989c"/><text x="1259.2" y="362.8" font-family="Liberation Sans" font-weight="700" font-size="15" fill="#232325" stroke="#232325" stroke-width="0.7" letter-spacing="-0.2">fx</text><path d="M1287,364 L1365.0,362.7" stroke="#8a8a8d" stroke-width="1.2"/><polygon points="1374,362.5 1365.1,366.0 1364.9,359.4" fill="#8a8a8d"/><path d="M1243.5,454.5 H1239.5 V492.5 H1243.5 M1274.5,454.5 H1278.5 V492.5 H1274.5" stroke="#7a7a7d" fill="none"/><g transform="translate(1239,454) scale(0.85)"><path d="M29.5,11.5 A11,8 0 0 0 11,11" stroke="#6e6e72" stroke-width="1.5" fill="none"/><polygon points="8.5,9 13.5,10 9.5,14" fill="#6e6e72"/><polygon points="33.6,21.9 25.3,26.4 20.8,18.1 29.1,13.6" fill="#5e5e62"/><polygon points="26.2,21.9 17.9,26.4 13.4,18.1 21.7,13.6" fill="#808084"/><polygon points="18.8,21.9 10.5,26.4 6.0,18.1 14.3,13.6" fill="#a8a8ac"/><path d="M12,30.5 H30" stroke="#6a6a6e" stroke-width="1.5"/><polygon points="10,30.5 13.5,28 13.5,33" fill="#6a6a6e"/><polygon points="32,30.5 28.5,28 28.5,33" fill="#6a6a6e"/></g><path d="M1260,453 L1263.7,401.4" stroke="#8a8a8d" stroke-width="1.2"/><polygon points="1264.3,392.4 1267.0,401.6 1260.4,401.1" fill="#8a8a8d"/><rect x="1465" y="50" width="1" height="21" fill="#f65e0a"/></svg>
<div class="t" style="left:1250px;top:52.84px;font-size:12px;line-height:16px;color:#f8efe6;font-weight:400;">Content</div>
<div class="t" style="left:1271.4px;top:144.34px;font-size:12px;line-height:16px;color:#d6d6d6;font-weight:400;letter-spacing:-0.3px">Float</div>
<div class="t" style="left:1309.5px;top:235.14px;font-size:12px;line-height:16px;color:#d6d6d6;font-weight:400;letter-spacing:-0.3px">Float</div>
<div class="t" style="left:1416.5px;top:352.84px;font-size:12px;line-height:16px;color:#d6d6d6;font-weight:400;letter-spacing:-0.6px">Main</div>
<div class="t" style="left:1256px;top:374.84px;font-size:12px;line-height:16px;color:#d6d6d6;font-weight:400;letter-spacing:-0.3px">Clip</div>
<svg style="left:0px;top:0px;" width="1763" height="320" viewBox="0 0 1763 320"><rect x="1474" y="52" width="12" height="1.8" fill="#6e6e72"/><rect x="1479.3" y="52" width="1.9" height="10" fill="#6e6e72"/><path d="M1486,59.5 L1479.5,66.5" stroke="#6e6e72" stroke-width="2.6"/><polygon points="1478,68 1478.5,65.5 1480.5,67.2" fill="#6e6e72"/><text x="1474" y="86" font-family="Liberation Sans" font-size="13" fill="#505053">A</text><rect x="1483.5" y="78" width="1.3" height="8" fill="#505053"/><polygon points="1481.5,79.5 1484.2,76 1486.8,79.5" fill="#505053"/><g fill="#8a8a8d"><rect x="1497" y="76" width="2" height="1"/><rect x="1500" y="76" width="1" height="1"/><rect x="1502" y="76" width="9" height="1"/><rect x="1497" y="78" width="14" height="1"/><rect x="1497" y="80" width="2" height="1"/><rect x="1500" y="80" width="1" height="1"/><rect x="1502" y="80" width="9" height="1"/><rect x="1497" y="82" width="14" height="1"/><rect x="1501" y="84" width="7" height="1"/></g><path d="M1509,84.5 H1511 V87.5 H1499" stroke="#8a8a8d" stroke-width="1" fill="none"/><polygon points="1496,87.5 1500,85 1500,90" fill="#8a8a8d"/><rect x="1519.5" y="72" width="1" height="21" fill="#3f3f42"/><polygon points="1483,266 1486,268 1478.5,278 1475.5,276" fill="#6e6e72"/><polygon points="1475,277 1478,279 1474,282" fill="#6e6e72"/><polygon points="1483.5,265.5 1484.5,264.8 1487,266.5 1486.3,267.5" fill="#6e6e72"/><rect x="1470.5" y="285.5" width="59.5" height="21" fill="none" stroke="#f65e0a"/><rect x="1472.5" y="288.5" width="15" height="14.5" fill="none" stroke="#6a6a6d"/><rect x="1475.3" y="290" width="1.6" height="7" fill="#8a8a8d"/><rect x="1532.5" y="288.5" width="15" height="14.5" fill="none" stroke="#6a6a6d"/><text x="1543" y="296" font-family="Liberation Sans" font-size="7.5" fill="#8a8a8d">0</text><rect x="1603.5" y="288.5" width="14.5" height="14.5" fill="none" stroke="#6a6a6d"/><rect x="1610" y="289" width="1" height="14" fill="#6a6a6d"/><rect x="1606" y="290" width="1.2" height="6" fill="#8a8a8d"/><text x="1612" y="296" font-family="Liberation Sans" font-size="7.5" fill="#8a8a8d">0</text><rect x="1626.5" y="288.5" width="14.5" height="14.5" fill="none" stroke="#6a6a6d"/><rect x="1627" y="295.5" width="14" height="1" fill="#6a6a6d"/><rect x="1629" y="289.5" width="1.2" height="4.5" fill="#8a8a8d"/><text x="1628" y="302.5" font-family="Liberation Sans" font-size="7.5" fill="#8a8a8d">0</text></svg>
<div class="t" style="left:1492px;top:52.54px;font-size:12px;line-height:16px;color:#d6d6d6;font-weight:400;letter-spacing:-0.1px">Text Editor</div>
<svg style="left:1556px;top:58px" width="207" height="5"><rect width="207" height="5" fill="url(#dotp)"/></svg>
<div class="t" style="left:1475px;top:94.5px;font-family:'Liberation Mono',monospace;font-size:13.2px;line-height:16px;color:#e8e8e8;font-weight:400;letter-spacing:0px">A==1 ? B :0</div>
<div class="t" style="left:1492.4px;top:265.84px;font-size:12px;line-height:16px;color:#d6d6d6;font-weight:400;letter-spacing:-0.2px">Properties</div>
<svg style="left:1554px;top:270px" width="209" height="5"><rect width="209" height="5" fill="url(#dotp)"/></svg>
<div class="t" style="left:1492.4px;top:288.34px;font-size:12px;line-height:16px;color:#d6d6d6;font-weight:400;letter-spacing:-0.1px">Inputs</div>
<div class="t" style="left:1552px;top:288.34px;font-size:12px;line-height:16px;color:#d6d6d6;font-weight:400;letter-spacing:0px">Outputs</div>
<svg style="left:0px;top:0px;" width="1763" height="520" viewBox="0 0 1763 520"><circle cx="1495.8" cy="336.8" r="11.4" fill="none" stroke="#5c5c60" stroke-width="1.2"/><circle cx="1495.8" cy="336.8" r="9.3" fill="#5c5c60"/><text x="1489" y="341.8" font-family="Liberation Sans" font-weight="700" font-size="15" fill="#232325" stroke="#232325" stroke-width="0.7" letter-spacing="-0.2">fx</text><polygon points="1484,369.5 1492,369.5 1488,374" fill="#6a6a6d"/><path d="M1500,363.5 H1496.5 V378.5 H1500 M1561,363.5 H1564.5 V378.5 H1561" stroke="#6a6a6d" fill="none"/><polygon points="1484,410.5 1492,410.5 1488,415" fill="#6a6a6d"/><path d="M1500,404.5 H1496.5 V419.5 H1500 M1560,404.5 H1563.5 V419.5 H1560" stroke="#6a6a6d" fill="none"/><rect x="1484.5" y="386.5" width="7.5" height="7.5" fill="none" stroke="#4e4e52"/><rect x="1496" y="383" width="62" height="16" fill="#262626"/><rect x="1497.6" y="385" width="2.2" height="11" fill="#e0e0e0"/><rect x="1558.5" y="382.5" width="120" height="15.5" fill="#4e4e50" stroke="#7a7a7c"/><rect x="1666" y="393" width="2" height="2" fill="#e0e0e0"/><rect x="1669.5" y="393" width="2" height="2" fill="#e0e0e0"/><rect x="1673" y="393" width="2" height="2" fill="#e0e0e0"/><path d="M1697,387.5 H1702 V393 H1697" stroke="#c8c8c8" stroke-width="1.1" fill="none"/><polygon points="1694,392 1697.5,389 1697.5,395" fill="#c8c8c8"/><rect x="1484.5" y="428.5" width="7.5" height="7.5" fill="none" stroke="#4e4e52"/><rect x="1496.5" y="423.5" width="62" height="15" fill="#222" stroke="#2c2c2c"/><circle cx="1509" cy="431" r="4.7" fill="#fb8c1c"/><rect x="1558.5" y="423.5" width="120.5" height="15" fill="#232323" stroke="#6a6a6c"/><path d="M1560,440 H1680 V424" stroke="#4a4a4c" fill="none"/><polygon points="1683,430 1692,430 1687.5,424.5" fill="#b8b8ba"/><polygon points="1683,432 1692,432 1687.5,437.5" fill="#b8b8ba"/><path d="M1697,428.5 H1702 V434 H1697" stroke="#6a6a6c" stroke-width="1.1" fill="none"/><polygon points="1694,433 1697.5,430 1697.5,436" fill="#6a6a6c"/><rect x="1484.5" y="448.5" width="7.5" height="7.5" fill="none" stroke="#4e4e52"/><rect x="1496.5" y="443.5" width="62" height="15" fill="#222" stroke="#2c2c2c"/><rect x="1502" y="444" width="56" height="14" fill="#6a6a6c"/><circle cx="1509" cy="451" r="4.7" fill="#fb8c1c"/><rect x="1558.5" y="443.5" width="120.5" height="15" fill="#232323" stroke="#6a6a6c"/><path d="M1560,460 H1680 V444" stroke="#4a4a4c" fill="none"/><polygon points="1683,450 1692,450 1687.5,444.5" fill="#b8b8ba"/><polygon points="1683,452 1692,452 1687.5,457.5" fill="#b8b8ba"/><path d="M1697,448.5 H1702 V454 H1697" stroke="#6a6a6c" stroke-width="1.1" fill="none"/><polygon points="1694,453 1697.5,450 1697.5,456" fill="#6a6a6c"/><rect x="1484.5" y="468.5" width="7.5" height="7.5" fill="none" stroke="#4e4e52"/><rect x="1496.5" y="463.5" width="62" height="15" fill="#222" stroke="#2c2c2c"/><rect x="1558.5" y="463.5" width="120.5" height="15" fill="#232323" stroke="#6a6a6c"/><polygon points="1683,470 1692,470 1687.5,464.5" fill="#b8b8ba"/><polygon points="1683,472 1692,472 1687.5,477.5" fill="#b8b8ba"/><path d="M1697,468.5 H1702 V474 H1697" stroke="#6a6a6c" stroke-width="1.1" fill="none"/><polygon points="1694,473 1697.5,470 1697.5,476" fill="#6a6a6c"/><rect x="1484.5" y="485.5" width="7.5" height="7.5" fill="none" stroke="#4e4e52"/><rect x="1496.5" y="480.5" width="62" height="15" fill="#222" stroke="#2c2c2c"/><rect x="1558.5" y="480.5" width="120.5" height="15" fill="#232323" stroke="#6a6a6c"/><polygon points="1683,487 1692,487 1687.5,481.5" fill="#b8b8ba"/><polygon points="1683,489 1692,489 1687.5,494.5" fill="#b8b8ba"/><path d="M1697,485.5 H1702 V491 H1697" stroke="#6a6a6c" stroke-width="1.1" fill="none"/><polygon points="1694,490 1697.5,487 1697.5,493" fill="#6a6a6c"/></svg>
<div class="t" style="left:1519px;top:320.54px;font-size:12px;line-height:16px;color:#d6d6d6;font-weight:700;letter-spacing:-0.3px">Float</div>
<div class="t" style="left:1519px;top:336.34px;font-size:12px;line-height:16px;color:#d6d6d6;font-weight:400;letter-spacing:-0.4px">Float Expression</div>
<div class="t" style="left:1502.6px;top:362.84px;font-size:12px;line-height:16px;color:#d6d6d6;font-weight:400;letter-spacing:-0.3px">Expression</div>
<div class="t" style="left:1506px;top:380.84px;font-size:12px;line-height:16px;color:#d6d6d6;font-weight:400;letter-spacing:-0.6px">Expressi...</div>
<div class="t" style="left:1561px;top:382.34px;font-size:12px;line-height:16px;color:#c8c8c8;font-weight:400;letter-spacing:-0.6px">A==1 ? B :0</div>
<div class="t" style="left:1502.6px;top:403.84px;font-size:12px;line-height:16px;color:#d6d6d6;font-weight:400;letter-spacing:-0.35px">Arguments</div>
<div class="t" style="left:1530px;top:423px;width:27px;text-align:right;font-size:12px;line-height:16px;color:#d6d6d6">A</div>
<div class="t" style="left:1560px;top:423px;width:118px;text-align:center;font-size:12px;line-height:16px;color:#d6d6d6">0</div>
<div class="t" style="left:1530px;top:443px;width:27px;text-align:right;font-size:12px;line-height:16px;color:#d6d6d6">B</div>
<div class="t" style="left:1560px;top:443px;width:118px;text-align:center;font-size:12px;line-height:16px;color:#d6d6d6">30</div>
<div class="t" style="left:1530px;top:463px;width:27px;text-align:right;font-size:12px;line-height:16px;color:#d6d6d6">C</div>
<div class="t" style="left:1560px;top:463px;width:118px;text-align:center;font-size:12px;line-height:16px;color:#d6d6d6">0</div>
<div class="a" style="left:1502px;top:474px;width:133px;height:34px;background:#fff;border:1px solid #767676;box-shadow:2px 2px 2px rgba(0,0,0,0.4)"></div>
<div class="t" style="left:1508px;top:475.34px;font-size:12px;line-height:16px;color:#575757;font-weight:400;letter-spacing:-0.1px">[Arguments] B (Single)</div>
<div class="t" style="left:1508px;top:489.84px;font-size:12px;line-height:16px;color:#575757;font-weight:400;letter-spacing:-0.3px">Value Direct to B</div>
<svg style="left:1474px;top:688px;" width="16" height="16" viewBox="0 0 16 16"><path d="M1.5,1.5 H8 L11.5,5 V7.5 M11.5,13 V14.5 H1.5 Z" fill="none" stroke="#6a6a6e" stroke-width="1.3"/><path d="M8,1.5 V5 H11.5" fill="none" stroke="#6a6a6e" stroke-width="1"/><path d="M3.5,7 H8 M3.5,9.5 H8 M3.5,12 H6" stroke="#6a6a6e" stroke-width="1"/><path d="M14.5,8.5 L9,14" stroke="#6a6a6e" stroke-width="2.2"/><polygon points="8,15.5 8.3,13.6 9.8,15" fill="#6a6a6e"/></svg>
<svg style="left:0px;top:0px;" width="1763" height="1084" viewBox="0 0 1763 1084"><g transform="translate(1472,714) scale(1.0)"><path d="M9.5,8.5 L3.5,14.5" stroke="#6e6e72" stroke-width="3.6" stroke-linecap="round"/><circle cx="3.2" cy="14.6" r="0.9" fill="#2d2d30"/><circle cx="12.5" cy="4.6" r="4.1" fill="#6e6e72"/><circle cx="14.6" cy="2.6" r="2.4" fill="#2d2d30"/><path d="M2,2.8 L8.2,9" stroke="#6e6e72" stroke-width="4.4" stroke-linecap="round"/><path d="M8.5,9.5 L14.5,15.5" stroke="#6e6e72" stroke-width="1.9" stroke-linecap="round"/><rect x="3.3" y="3.3" width="1" height="1" fill="#2d2d30" opacity="0.7"/><rect x="5.3" y="4.3" width="1" height="1" fill="#2d2d30" opacity="0.7"/><rect x="4.3" y="5.8" width="1" height="1" fill="#2d2d30" opacity="0.7"/><rect x="6.3" y="6.8" width="1" height="1" fill="#2d2d30" opacity="0.7"/></g><rect x="1470.5" y="734.5" width="19.5" height="19.5" fill="none" stroke="#f65e0a"/><rect x="1470.5" y="757.5" width="19.5" height="19.5" fill="none" stroke="#f65e0a"/><rect x="1470.5" y="780.5" width="19.5" height="19.5" fill="none" stroke="#f65e0a"/><rect x="1474.5" y="738.5" width="8" height="8" fill="none" stroke="#6e6e72"/><rect x="1477.5" y="741.5" width="9" height="9" fill="#2d2d30" stroke="#6e6e72"/><rect x="1474" y="761" width="4" height="4" fill="#6e6e72"/><rect x="1480" y="762.5" width="7" height="1" fill="#6e6e72"/><rect x="1474" y="768" width="4" height="4" fill="#6e6e72"/><rect x="1480" y="770" width="7" height="1" fill="#6e6e72"/><rect x="1474" y="782" width="12" height="1" fill="#6e6e72"/><rect x="1476.5" y="784" width="1" height="8" fill="#6e6e72"/><polygon points="1474.5,791 1477,795 1479.5,791" fill="#6e6e72"/><rect x="1482.5" y="784" width="1" height="6" fill="#6e6e72"/><polygon points="1480.5,789 1483,793 1485.5,789" fill="#6e6e72"/><rect x="1610" y="736" width="1" height="17" fill="#3f3f42"/><rect x="1700" y="736" width="1" height="17" fill="#3f3f42"/><rect x="1578" y="754" width="1" height="17" fill="#3f3f42"/><rect x="1665.5" y="754" width="1" height="17" fill="#3f3f42"/><rect x="1750.6" y="754" width="1" height="17" fill="#3f3f42"/><rect x="1706" y="772" width="1" height="17" fill="#3f3f42"/><rect x="1707" y="790" width="1" height="17" fill="#3f3f42"/><rect x="1494.5" y="789" width="106.5" height="18" fill="#3f3f42"/><rect x="1494" y="807" width="269" height="2" fill="#3a3a3c"/><circle cx="1503.8" cy="744" r="7.2" fill="#3a3a3a" stroke="#555" stroke-width="0.8"/><circle cx="1503.8" cy="744" r="6.2" fill="#f65e0a"/><polygon points="1614,740 1618,737 1628,737 1628,748 1624,751 1614,751" fill="#6a6a6e"/><polygon points="1614,740 1624,740 1624,751 1614,751" fill="#8a8a8e"/><polygon points="1703,743.5 1707,740 1711,743.5 1707,747" fill="#d8d8d8"/><polygon points="1707.5,743.5 1711.5,740 1715.5,743.5 1711.5,747" fill="#9a9a9e"/><polygon points="1712,743.5 1716,740 1720,743.5 1716,747" fill="#6a6a6e"/><rect x="1496" y="754" width="4" height="4" fill="#6a6a6e"/><rect x="1496" y="762" width="4" height="4" fill="#6a6a6e"/><rect x="1500" y="758" width="4" height="4" fill="#6a6a6e"/><rect x="1500" y="766" width="4" height="4" fill="#6a6a6e"/><rect x="1504" y="754" width="4" height="4" fill="#6a6a6e"/><rect x="1504" y="762" width="4" height="4" fill="#6a6a6e"/><rect x="1508" y="758" width="4" height="4" fill="#6a6a6e"/><rect x="1508" y="766" width="4" height="4" fill="#6a6a6e"/><circle cx="1589" cy="762" r="6.8" fill="#1aa01a" stroke="#333" stroke-width="1"/><circle cx="1589" cy="762" r="5.5" fill="#22d022"/><polygon points="1587,758.5 1592,762 1587,765.5" fill="#111"/><circle cx="1676" cy="759" r="4" fill="#f0e040"/><rect x="1674" y="762" width="4" height="4" fill="#f0e040"/><rect x="1674.3" y="766.5" width="3.4" height="1.2" fill="#888"/><rect x="1674.8" y="768" width="2.4" height="1" fill="#888"/><rect x="1497" y="779.5" width="3.5" height="1" fill="#6a6a6e"/><rect x="1501" y="774.5" width="7.5" height="9" fill="#f65e0a"/><rect x="1501" y="774.5" width="7.5" height="9" fill="none" stroke="#7a3010" stroke-width="0.6"/><rect x="1710" y="773" width="9" height="9" fill="#5a5a5e"/><rect x="1713" y="776" width="9" height="9" fill="#8a8a8e"/><rect x="1715" y="778" width="9" height="9" fill="#d8d8d8"/><path d="M1497.5,790.5 H1505 L1509.5,795 V805.5 H1497.5 Z" fill="#2d2d30" stroke="#fff" stroke-width="1.4"/><text x="1498.5" y="803" font-family="Liberation Sans" font-size="4.6" fill="#fff">XML</text><polygon points="1605,795 1608,795 1611,792 1611,803 1608,800 1605,800" fill="#5a5a5e"/><path d="M1613,794.5 A4,4 0 0 1 1613,801 M1615,792.5 A7,7 0 0 1 1615,803" stroke="#5a5a5e" fill="none" stroke-width="1.2"/><circle cx="1718" cy="798" r="6.5" fill="#3a3a3d" stroke="#5a5a5e" stroke-width="1"/><text x="1718" y="801.5" text-anchor="middle" font-family="Liberation Sans" font-weight="700" font-size="9" fill="#5a5a5e">fx</text><path d="M1507,819.5 H1502.5 V822.5 M1533,819.5 H1537.5 V822.5 M1502.5,851 V854.5 H1537.5 V851" stroke="#7a7a7d" fill="none"/><path d="M1510,823 H1523 L1530,830 V850 a1.5,1.5 0 0 1 -1.5,1.5 H1509.5 a1.5,1.5 0 0 1 -1.5,-1.5 V824.5 a1.5,1.5 0 0 1 1.5,-1.5 Z" fill="none" stroke="#6a6a6e" stroke-width="1.8"/><polygon points="1523,823 1530,830 1523,830" fill="#6a6a6e"/><text x="1519.5" y="844" text-anchor="middle" font-family="Liberation Sans" font-weight="700" font-size="9.2" fill="#6a6a6e" letter-spacing="-0.3">TXT</text><path d="M1504,900.5 H1539.5 V865.5" stroke="#6a6a6e" fill="none"/><path d="M1505.5,902.5 H1541.5 V867" stroke="#6a6a6e" fill="none"/><path d="M1507,863.5 H1502.5 V866.5 M1533,863.5 H1537.5 V866.5 M1502.5,895 V898.5 H1537.5 V895" stroke="#7a7a7d" fill="none"/><path d="M1510,867 H1523 L1530,874 V894 a1.5,1.5 0 0 1 -1.5,1.5 H1509.5 a1.5,1.5 0 0 1 -1.5,-1.5 V868.5 a1.5,1.5 0 0 1 1.5,-1.5 Z" fill="none" stroke="#6a6a6e" stroke-width="1.8"/><polygon points="1523,867 1530,874 1523,874" fill="#6a6a6e"/><text x="1519.5" y="888" text-anchor="middle" font-family="Liberation Sans" font-weight="700" font-size="9.2" fill="#6a6a6e" letter-spacing="-0.3">XLS</text><path d="M1504,944.5 H1539.5 V909.5" stroke="#6a6a6e" fill="none"/><path d="M1505.5,946.5 H1541.5 V911" stroke="#6a6a6e" fill="none"/><path d="M1507,907.5 H1502.5 V910.5 M1533,907.5 H1537.5 V910.5 M1502.5,939 V942.5 H1537.5 V939" stroke="#7a7a7d" fill="none"/><path d="M1510,911 H1523 L1530,918 V938 a1.5,1.5 0 0 1 -1.5,1.5 H1509.5 a1.5,1.5 0 0 1 -1.5,-1.5 V912.5 a1.5,1.5 0 0 1 1.5,-1.5 Z" fill="none" stroke="#6a6a6e" stroke-width="1.8"/><polygon points="1523,911 1530,918 1523,918" fill="#6a6a6e"/><text x="1519.5" y="932" text-anchor="middle" font-family="Liberation Sans" font-weight="700" font-size="9.2" fill="#6a6a6e" letter-spacing="-0.3">XML</text><path d="M1504,988.5 H1539.5 V953.5" stroke="#6a6a6e" fill="none"/><path d="M1505.5,990.5 H1541.5 V955" stroke="#6a6a6e" fill="none"/><path d="M1507,951.5 H1502.5 V954.5 M1533,951.5 H1537.5 V954.5 M1502.5,983 V986.5 H1537.5 V983" stroke="#7a7a7d" fill="none"/><path d="M1510,955 H1523 L1530,962 V982 a1.5,1.5 0 0 1 -1.5,1.5 H1509.5 a1.5,1.5 0 0 1 -1.5,-1.5 V956.5 a1.5,1.5 0 0 1 1.5,-1.5 Z" fill="none" stroke="#6a6a6e" stroke-width="1.8"/><polygon points="1523,955 1530,962 1523,962" fill="#6a6a6e"/><text x="1519.5" y="976" text-anchor="middle" font-family="Liberation Sans" font-weight="700" font-size="9.2" fill="#6a6a6e" letter-spacing="-0.3">DB</text><path d="M1671,819.5 H1666.5 V822.5 M1697,819.5 H1701.5 V822.5 M1666.5,851 V854.5 H1701.5 V851" stroke="#7a7a7d" fill="none"/><path d="M1674,823 H1687 L1694,830 V850 a1.5,1.5 0 0 1 -1.5,1.5 H1673.5 a1.5,1.5 0 0 1 -1.5,-1.5 V824.5 a1.5,1.5 0 0 1 1.5,-1.5 Z" fill="none" stroke="#6a6a6e" stroke-width="1.8"/><polygon points="1687,823 1694,830 1687,830" fill="#6a6a6e"/><text x="1683.5" y="840" text-anchor="middle" font-family="Liberation Sans" font-weight="700" font-size="8.4" fill="#6a6a6e" letter-spacing="-0.3">RSS</text><text x="1683.5" y="847.5" text-anchor="middle" font-family="Liberation Sans" font-weight="700" font-size="8.4" fill="#6a6a6e" letter-spacing="-0.3">RDF</text><path d="M1671,863.5 H1666.5 V866.5 M1697,863.5 H1701.5 V866.5 M1666.5,895 V898.5 H1701.5 V895" stroke="#7a7a7d" fill="none"/><path d="M1674,867 H1687 L1694,874 V894 a1.5,1.5 0 0 1 -1.5,1.5 H1673.5 a1.5,1.5 0 0 1 -1.5,-1.5 V868.5 a1.5,1.5 0 0 1 1.5,-1.5 Z" fill="none" stroke="#6a6a6e" stroke-width="1.8"/><polygon points="1687,867 1694,874 1687,874" fill="#6a6a6e"/><text x="1683.5" y="888" text-anchor="middle" font-family="Liberation Sans" font-weight="700" font-size="7.8" fill="#6a6a6e" letter-spacing="-0.3">JSON</text><path d="M1671,907.5 H1666.5 V910.5 M1697,907.5 H1701.5 V910.5 M1666.5,939 V942.5 H1701.5 V939" stroke="#7a7a7d" fill="none"/><path d="M1674,911 H1687 L1694,918 V938 a1.5,1.5 0 0 1 -1.5,1.5 H1673.5 a1.5,1.5 0 0 1 -1.5,-1.5 V912.5 a1.5,1.5 0 0 1 1.5,-1.5 Z" fill="none" stroke="#6a6a6e" stroke-width="1.8"/><polygon points="1687,911 1694,918 1687,918" fill="#6a6a6e"/><text x="1683.5" y="930" text-anchor="middle" font-family="Liberation Sans" font-weight="700" font-size="9.2" fill="#6a6a6e" letter-spacing="-0.3">XSL</text><path d="M1676,935.5 H1690" stroke="#6a6a6e"/><polygon points="1691,935.5 1688,933.8 1688,937.2" fill="#6a6a6e"/><path d="M1671,951.5 H1666.5 V954.5 M1697,951.5 H1701.5 V954.5 M1666.5,983 V986.5 H1701.5 V983" stroke="#7a7a7d" fill="none"/><path d="M1674,955 H1687 L1694,962 V982 a1.5,1.5 0 0 1 -1.5,1.5 H1673.5 a1.5,1.5 0 0 1 -1.5,-1.5 V956.5 a1.5,1.5 0 0 1 1.5,-1.5 Z" fill="none" stroke="#6a6a6e" stroke-width="1.8"/><polygon points="1687,955 1694,962 1687,962" fill="#6a6a6e"/><rect x="1682" y="965" width="2.6" height="14" fill="#6a6a6e"/><rect x="1676" y="970.7" width="14.6" height="2.6" fill="#6a6a6e"/><rect x="1470" y="1019" width="67" height="21" fill="#3f3f42"/><g transform="translate(1472,1021) scale(0.95)"><path d="M9.5,8.5 L3.5,14.5" stroke="#6e6e72" stroke-width="3.6" stroke-linecap="round"/><circle cx="3.2" cy="14.6" r="0.9" fill="#3f3f42"/><circle cx="12.5" cy="4.6" r="4.1" fill="#6e6e72"/><circle cx="14.6" cy="2.6" r="2.4" fill="#3f3f42"/><path d="M2,2.8 L8.2,9" stroke="#6e6e72" stroke-width="4.4" stroke-linecap="round"/><path d="M8.5,9.5 L14.5,15.5" stroke="#6e6e72" stroke-width="1.9" stroke-linecap="round"/><rect x="3.3" y="3.3" width="1" height="1" fill="#3f3f42" opacity="0.7"/><rect x="5.3" y="4.3" width="1" height="1" fill="#3f3f42" opacity="0.7"/><rect x="4.3" y="5.8" width="1" height="1" fill="#3f3f42" opacity="0.7"/><rect x="6.3" y="6.8" width="1" height="1" fill="#3f3f42" opacity="0.7"/></g><g transform="translate(1539,1021) scale(0.95)"><path d="M9.5,8.5 L3.5,14.5" stroke="#6e6e72" stroke-width="3.6" stroke-linecap="round"/><circle cx="3.2" cy="14.6" r="0.9" fill="#2d2d30"/><circle cx="12.5" cy="4.6" r="4.1" fill="#6e6e72"/><circle cx="14.6" cy="2.6" r="2.4" fill="#2d2d30"/><path d="M2,2.8 L8.2,9" stroke="#6e6e72" stroke-width="4.4" stroke-linecap="round"/><path d="M8.5,9.5 L14.5,15.5" stroke="#6e6e72" stroke-width="1.9" stroke-linecap="round"/><rect x="3.3" y="3.3" width="1" height="1" fill="#2d2d30" opacity="0.7"/><rect x="5.3" y="4.3" width="1" height="1" fill="#2d2d30" opacity="0.7"/><rect x="4.3" y="5.8" width="1" height="1" fill="#2d2d30" opacity="0.7"/><rect x="6.3" y="6.8" width="1" height="1" fill="#2d2d30" opacity="0.7"/></g><g transform="translate(1661,1021) scale(0.95)"><path d="M9.5,8.5 L3.5,14.5" stroke="#6e6e72" stroke-width="3.6" stroke-linecap="round"/><circle cx="3.2" cy="14.6" r="0.9" fill="#2d2d30"/><circle cx="12.5" cy="4.6" r="4.1" fill="#6e6e72"/><circle cx="14.6" cy="2.6" r="2.4" fill="#2d2d30"/><path d="M2,2.8 L8.2,9" stroke="#6e6e72" stroke-width="4.4" stroke-linecap="round"/><path d="M8.5,9.5 L14.5,15.5" stroke="#6e6e72" stroke-width="1.9" stroke-linecap="round"/><rect x="3.3" y="3.3" width="1" height="1" fill="#2d2d30" opacity="0.7"/><rect x="5.3" y="4.3" width="1" height="1" fill="#2d2d30" opacity="0.7"/><rect x="4.3" y="5.8" width="1" height="1" fill="#2d2d30" opacity="0.7"/><rect x="6.3" y="6.8" width="1" height="1" fill="#2d2d30" opacity="0.7"/></g><rect x="1659" y="1021" width="1" height="17" fill="#3f3f42"/></svg>
<div class="t" style="left:1493px;top:715.34px;font-size:12px;line-height:16px;color:#d6d6d6;font-weight:400;letter-spacing:-0.05px">Toolbox</div>
<svg style="left:1542px;top:721px" width="221" height="5"><rect width="221" height="5" fill="url(#dotp)"/></svg>
<div class="t" style="left:1514px;top:736.34px;font-size:12px;line-height:16px;color:#d6d6d6;font-weight:400;letter-spacing:-0.3px">Color/Material</div>
<div class="t" style="left:1631.5px;top:736.34px;font-size:12px;line-height:16px;color:#d6d6d6;font-weight:400;letter-spacing:-0.3px">Geometry</div>
<div class="t" style="left:1721px;top:736.34px;font-size:12px;line-height:16px;color:#d6d6d6;font-weight:400;letter-spacing:-0.3px">Interaction</div>
<div class="t" style="left:1514px;top:754.34px;font-size:12px;line-height:16px;color:#d6d6d6;font-weight:400;letter-spacing:-0.3px">Texture</div>
<div class="t" style="left:1599px;top:754.34px;font-size:12px;line-height:16px;color:#d6d6d6;font-weight:400;letter-spacing:-0.3px">Animation</div>
<div class="t" style="left:1686px;top:754.34px;font-size:12px;line-height:16px;color:#d6d6d6;font-weight:400;letter-spacing:-0.3px">Light</div>
<div class="t" style="left:1514px;top:772.34px;font-size:12px;line-height:16px;color:#d6d6d6;font-weight:400;letter-spacing:-0.3px">Slides</div>
<div class="t" style="left:1727px;top:772.34px;font-size:12px;line-height:16px;color:#d6d6d6;font-weight:400;letter-spacing:-0.3px">Layers</div>
<div class="t" style="left:1514px;top:790.34px;font-size:12px;line-height:16px;color:#d6d6d6;font-weight:400;letter-spacing:-0.3px">Data</div>
<div class="t" style="left:1620px;top:790.34px;font-size:12px;line-height:16px;color:#d6d6d6;font-weight:400;letter-spacing:-0.3px">Sound</div>
<div class="t" style="left:1727.6px;top:790.34px;font-size:12px;line-height:16px;color:#d6d6d6;font-weight:400;letter-spacing:-0.3px">Logic</div>
<div class="t" style="left:1544px;top:828.34px;font-size:12px;line-height:16px;color:#d6d6d6;font-weight:400;letter-spacing:-0.55px">Text File</div>
<div class="t" style="left:1544px;top:872.34px;font-size:12px;line-height:16px;color:#d6d6d6;font-weight:400;letter-spacing:-0.55px">Excel Workbook</div>
<div class="t" style="left:1544px;top:916.34px;font-size:12px;line-height:16px;color:#d6d6d6;font-weight:400;letter-spacing:-0.55px">XML File</div>
<div class="t" style="left:1544px;top:960.34px;font-size:12px;line-height:16px;color:#d6d6d6;font-weight:400;letter-spacing:-0.55px">DataBase</div>
<div class="t" style="left:1708px;top:828.34px;font-size:12px;line-height:16px;color:#d6d6d6;font-weight:400;letter-spacing:-0.55px">RSS/RDF Merger</div>
<div class="t" style="left:1708px;top:872.34px;font-size:12px;line-height:16px;color:#d6d6d6;font-weight:400;letter-spacing:-0.55px">Json Parser</div>
<div class="t" style="left:1708px;top:916.34px;font-size:12px;line-height:16px;color:#d6d6d6;font-weight:400;letter-spacing:-0.55px">XSLT</div>
<div class="t" style="left:1708px;top:960.34px;font-size:12px;line-height:16px;color:#d6d6d6;font-weight:400;letter-spacing:-0.55px">ResourceLink</div>
<div class="t" style="left:1491px;top:1022.84px;font-size:12px;line-height:16px;color:#d6d6d6;font-weight:400;letter-spacing:-0.2px">Toolbox</div>
<div class="t" style="left:1559px;top:1022.84px;font-size:12px;line-height:16px;color:#d6d6d6;font-weight:400;letter-spacing:-0.2px">Project Repository</div>
<div class="t" style="left:1682px;top:1022.84px;font-size:12px;line-height:16px;color:#d6d6d6;font-weight:400;letter-spacing:-0.2px">Repositories Repository</div>
<svg style="left:0px;top:0px;" width="1763" height="1084" viewBox="0 0 1763 1084"><g transform="translate(296,591.5)"><circle r="5.3" fill="none" stroke="#6e6e72" stroke-width="3.2"/><rect x="-1.6" y="-8" width="3.2" height="3.6" fill="#6e6e72" transform="rotate(0)"/><rect x="-1.6" y="-8" width="3.2" height="3.6" fill="#6e6e72" transform="rotate(45)"/><rect x="-1.6" y="-8" width="3.2" height="3.6" fill="#6e6e72" transform="rotate(90)"/><rect x="-1.6" y="-8" width="3.2" height="3.6" fill="#6e6e72" transform="rotate(135)"/><rect x="-1.6" y="-8" width="3.2" height="3.6" fill="#6e6e72" transform="rotate(180)"/><rect x="-1.6" y="-8" width="3.2" height="3.6" fill="#6e6e72" transform="rotate(225)"/><rect x="-1.6" y="-8" width="3.2" height="3.6" fill="#6e6e72" transform="rotate(270)"/><rect x="-1.6" y="-8" width="3.2" height="3.6" fill="#6e6e72" transform="rotate(315)"/></g></svg>
<div class="t" style="left:308px;top:583.84px;font-size:12px;line-height:16px;color:#d6d6d6;font-weight:400;letter-spacing:-0.35px">Renderer</div>
<svg style="left:364px;top:589px" width="1101" height="5"><rect width="1101" height="5" fill="url(#dotp)"/></svg>
<svg style="left:0px;top:0px;" width="1763" height="1084" viewBox="0 0 1763 1084"><defs><linearGradient id="gPink" x1="1" y1="0" x2="0" y2="1"><stop offset="0" stop-color="#d47ad8"/><stop offset="1" stop-color="#c85bc9"/></linearGradient><linearGradient id="gRect" gradientUnits="userSpaceOnUse" x1="830" y1="650" x2="1080" y2="720"><stop offset="0" stop-color="#ffffff"/><stop offset="0.12" stop-color="#fbfbfb"/><stop offset="0.55" stop-color="#cdcdcd"/><stop offset="1" stop-color="#bababa"/></linearGradient><radialGradient id="gRectBL" gradientUnits="userSpaceOnUse" cx="744" cy="808" r="48"><stop offset="0" stop-color="#c8c8c8" stop-opacity="0.6"/><stop offset="1" stop-color="#c4c4c4" stop-opacity="0"/></radialGradient><radialGradient id="gCirc" cx="0.4" cy="0.4" r="0.7"><stop offset="0" stop-color="#cdcdcd"/><stop offset="1" stop-color="#c2c2c2"/></radialGradient><linearGradient id="gHeadBase" gradientUnits="userSpaceOnUse" x1="830" y1="680" x2="930" y2="960"><stop offset="0" stop-color="#229468"/><stop offset="0.4" stop-color="#1b7d58"/><stop offset="0.72" stop-color="#115c40"/><stop offset="1" stop-color="#17855e"/></linearGradient><filter id="blur2" x="-50%" y="-50%" width="200%" height="200%"><feGaussianBlur stdDeviation="2"/></filter><filter id="blur4" x="-50%" y="-50%" width="200%" height="200%"><feGaussianBlur stdDeviation="4"/></filter><filter id="blur8" x="-50%" y="-50%" width="200%" height="200%"><feGaussianBlur stdDeviation="8"/></filter><filter id="blur1" x="-50%" y="-50%" width="200%" height="200%"><feGaussianBlur stdDeviation="1"/></filter></defs><rect x="531" y="628" width="53" height="54" fill="url(#gPink)"/><rect x="746" y="612" width="334" height="188" fill="url(#gRect)"/><rect x="746" y="612" width="334" height="188" fill="url(#gRectBL)"/><circle cx="1118" cy="663" r="34" fill="url(#gCirc)"/><clipPath id="headClip"><path d="M878.6,672 C889.4,671.6 900.2,672.8 910,675.7 C919.8,678.6 929.9,683.0 937.6,689.5 C945.3,696.0 951.6,705.5 956,715 C960.4,724.5 962.6,735.0 964,746.7 C965.4,758.4 964.2,776.3 964.5,785 C964.8,793.7 963.8,796.5 966,799 C968.2,801.5 974.7,798.8 978,800 C981.3,801.2 984.7,802.3 985.6,806 C986.5,809.7 984.8,817.7 983.5,822 C982.2,826.3 980.9,828.3 977.7,831.6 C974.5,834.9 968.5,836.6 964.4,841.6 C960.2,846.6 955.6,854.0 952.8,861.5 C950.0,869.0 948.3,880.0 947.8,886.4 C947.2,892.8 948.1,894.4 949.5,899.7 C950.9,905.0 952.1,912.8 956,918 C959.9,923.2 969.0,927.7 972.7,931 C976.5,934.3 978.8,934.3 978.5,938 C978.2,941.7 976.1,947.8 971,953 C965.9,958.2 956.0,965.1 948,969.5 C940.0,973.9 932.7,977.4 923,979.5 C913.3,981.6 900.8,982.8 889.7,982 C878.6,981.2 865.0,977.4 856.4,974.5 C847.8,971.6 842.1,968.1 838,964.5 C833.9,960.9 832.0,957.8 831.5,953 C831.0,948.2 832.5,940.9 835,936 C837.5,931.1 845.7,927.6 846.5,923.8 C847.3,920.0 843.1,917.0 840,913 C836.9,909.0 832.5,908.3 828,899.7 C823.5,891.1 817.2,873.1 813,861.5 C808.8,849.9 805.6,842.1 803,830 C800.4,817.9 798.2,800.2 797.4,789 C796.6,777.8 797.4,770.7 798,763 C798.6,755.3 797.7,753.4 801,743 C804.3,732.6 810.4,711.4 817.7,700.6 C825.0,689.8 834.9,682.8 845,678 C855.1,673.2 867.8,672.4 878.6,672 Z"/></clipPath><path d="M878.6,672 C889.4,671.6 900.2,672.8 910,675.7 C919.8,678.6 929.9,683.0 937.6,689.5 C945.3,696.0 951.6,705.5 956,715 C960.4,724.5 962.6,735.0 964,746.7 C965.4,758.4 964.2,776.3 964.5,785 C964.8,793.7 963.8,796.5 966,799 C968.2,801.5 974.7,798.8 978,800 C981.3,801.2 984.7,802.3 985.6,806 C986.5,809.7 984.8,817.7 983.5,822 C982.2,826.3 980.9,828.3 977.7,831.6 C974.5,834.9 968.5,836.6 964.4,841.6 C960.2,846.6 955.6,854.0 952.8,861.5 C950.0,869.0 948.3,880.0 947.8,886.4 C947.2,892.8 948.1,894.4 949.5,899.7 C950.9,905.0 952.1,912.8 956,918 C959.9,923.2 969.0,927.7 972.7,931 C976.5,934.3 978.8,934.3 978.5,938 C978.2,941.7 976.1,947.8 971,953 C965.9,958.2 956.0,965.1 948,969.5 C940.0,973.9 932.7,977.4 923,979.5 C913.3,981.6 900.8,982.8 889.7,982 C878.6,981.2 865.0,977.4 856.4,974.5 C847.8,971.6 842.1,968.1 838,964.5 C833.9,960.9 832.0,957.8 831.5,953 C831.0,948.2 832.5,940.9 835,936 C837.5,931.1 845.7,927.6 846.5,923.8 C847.3,920.0 843.1,917.0 840,913 C836.9,909.0 832.5,908.3 828,899.7 C823.5,891.1 817.2,873.1 813,861.5 C808.8,849.9 805.6,842.1 803,830 C800.4,817.9 798.2,800.2 797.4,789 C796.6,777.8 797.4,770.7 798,763 C798.6,755.3 797.7,753.4 801,743 C804.3,732.6 810.4,711.4 817.7,700.6 C825.0,689.8 834.9,682.8 845,678 C855.1,673.2 867.8,672.4 878.6,672 Z" fill="url(#gHeadBase)"/><g clip-path="url(#headClip)"><ellipse cx="885" cy="700" rx="70" ry="30" fill="#26a282" filter="url(#blur8)" opacity="0.8"/><ellipse cx="955" cy="760" rx="14" ry="40" fill="#27a084" filter="url(#blur4)" opacity="0.8"/><ellipse cx="872" cy="902" rx="55" ry="22" fill="#082c22" filter="url(#blur8)"/><ellipse cx="888" cy="945" rx="16" ry="26" fill="#0b382b" filter="url(#blur8)" opacity="0.75"/><ellipse cx="950" cy="925" rx="22" ry="30" fill="#1f9a7c" filter="url(#blur8)" opacity="0.9"/><ellipse cx="900" cy="975" rx="70" ry="10" fill="#1b9272" filter="url(#blur4)" opacity="0.9"/><ellipse cx="930" cy="840" rx="20" ry="35" fill="#135846" filter="url(#blur8)" opacity="0.7"/><ellipse cx="818" cy="880" rx="10" ry="25" fill="#114d3c" filter="url(#blur4)" opacity="0.6"/><linearGradient id="gOv" gradientUnits="userSpaceOnUse" x1="0" y1="680" x2="0" y2="980"><stop offset="0" stop-color="#001a0e" stop-opacity="0"/><stop offset="0.3" stop-color="#001a0e" stop-opacity="0.12"/><stop offset="0.75" stop-color="#001a0e" stop-opacity="0.28"/><stop offset="1" stop-color="#001a0e" stop-opacity="0.1"/></linearGradient><rect x="780" y="660" width="220" height="330" fill="url(#gOv)"/><ellipse cx="892" cy="765" rx="30" ry="9" fill="#08281f" filter="url(#blur4)" opacity="0.95"/><ellipse cx="820" cy="780" rx="13" ry="10" fill="#0b3a2e" filter="url(#blur4)" opacity="0.9"/><ellipse cx="817.7" cy="787.3" rx="11" ry="4.6" fill="#06221a" filter="url(#blur1)"/><ellipse cx="817.7" cy="788" rx="9" ry="3.4" fill="#1a7456"/><ellipse cx="818" cy="787.2" rx="5" ry="1.6" fill="#2a9a78" filter="url(#blur1)"/><ellipse cx="895" cy="785.5" rx="19" ry="6.5" fill="#06221a" filter="url(#blur1)"/><ellipse cx="895" cy="786.3" rx="16.5" ry="4.8" fill="#1a7456"/><ellipse cx="893" cy="785.2" rx="8" ry="2.2" fill="#2a9a78" filter="url(#blur1)"/><path d="M843,782 Q836,800 830,822 Q834,834 848,836 Q860,836 864,828 Q858,805 852,785 Z" fill="#1e8a62" filter="url(#blur2)"/><path d="M841,780 Q836,800 832,818 L837,821 Q840,802 846,782 Z" fill="#7af4f0" filter="url(#blur1)" opacity="0.85"/><ellipse cx="848" cy="824" rx="8" ry="5" fill="#2fb088" filter="url(#blur2)" opacity="0.9"/><path d="M828,830 Q835,828 842,833 Q850,829 865,831 Q858,840 845,840 Q833,840 828,830 Z" fill="#04160f" filter="url(#blur1)"/><ellipse cx="852" cy="800" rx="6" ry="14" fill="#0d4030" filter="url(#blur2)" opacity="0.6"/><ellipse cx="890" cy="806" rx="15" ry="3.5" fill="#7ae8d8" filter="url(#blur2)" opacity="0.55"/><ellipse cx="950" cy="770" rx="8" ry="28" fill="#2fae8c" filter="url(#blur4)" opacity="0.8"/><ellipse cx="845" cy="856" rx="12" ry="4" fill="#2fb090" filter="url(#blur2)" opacity="0.8"/><path d="M823,864 Q850,867 878,869 Q850,873 826,869 Z" fill="#041a14" filter="url(#blur1)"/><path d="M826,871 Q850,879 874,870 Q850,883 828,875 Z" fill="#3cc0a0" filter="url(#blur1)" opacity="0.8"/><ellipse cx="879" cy="684" rx="8" ry="4" fill="#70f0e0" filter="url(#blur2)"/><ellipse cx="928" cy="708" rx="14" ry="9" fill="#3fd8c8" filter="url(#blur4)" opacity="0.8"/><ellipse cx="925" cy="706" rx="8" ry="4.5" fill="#80fff8" filter="url(#blur2)"/><ellipse cx="864" cy="714" rx="13" ry="4" fill="#a0f0e0" filter="url(#blur2)" opacity="0.7"/><path d="M822,712 Q838,700 860,698" stroke="#60e0e0" stroke-width="1.5" fill="none" filter="url(#blur1)" opacity="0.7"/><ellipse cx="818" cy="728" rx="8" ry="10" fill="#3cb89c" filter="url(#blur4)" opacity="0.7"/><path d="M850,712 L858,706 L862,712 L854,718 Z M864,704 L872,699 L876,705 L868,711 Z" fill="#c8fff0" filter="url(#blur1)" opacity="0.7"/><path d="M964,770 Q964,830 954,862 Q948,885 950,905 L942,905 Q940,880 945,860 Q955,825 955,770 Z" fill="#66eef2" filter="url(#blur2)" opacity="0.95"/><path d="M962,795 Q960,830 953,855 L950,854 Q956,830 958,795 Z" fill="#c8ffff" filter="url(#blur1)" opacity="0.8"/><ellipse cx="975" cy="818" rx="6" ry="12" fill="#0e4638" filter="url(#blur2)"/><path d="M968,802 Q984,806 982,824" stroke="#60e0e8" stroke-width="2" fill="none" filter="url(#blur1)"/><path d="M799,765 Q799,800 806,835 Q812,860 820,885 L817,886 Q808,860 802,835 Q795,800 796,765 Z" fill="#6af0f0" filter="url(#blur1)" opacity="0.7"/><ellipse cx="845" cy="934" rx="4.5" ry="10" fill="#90f8f8" filter="url(#blur2)"/><ellipse cx="964" cy="942" rx="7" ry="5" fill="#60f0f0" filter="url(#blur2)" opacity="0.9"/><ellipse cx="921" cy="973" rx="8" ry="3" fill="#c0fff0" filter="url(#blur1)" opacity="0.8"/><path d="M848,920 Q880,922 928,890" stroke="#051a14" stroke-width="1" fill="none" opacity="0.5"/></g></svg>
<svg style="left:0px;top:0px;" width="1763" height="1084" viewBox="0 0 1763 1084"><polygon points="16,1053.5 23,1052.5 23,1059.5 16,1059.5" fill="#fff"/><polygon points="24,1052.3 32.3,1051.3 32.3,1059.5 24,1059.5" fill="#fff"/><polygon points="16,1060.5 23,1060.5 23,1067.5 16,1066.5" fill="#fff"/><polygon points="24,1060.5 32.3,1060.5 32.3,1068.7 24,1067.7" fill="#fff"/><rect x="66.5" y="1053.5" width="11" height="14" fill="none" stroke="#fff" stroke-width="1.2"/><path d="M64,1056 H62.5 V1065 H64 M80,1056 H81.5 V1065 H80" stroke="#fff" stroke-width="1.1" fill="none"/><path d="M131.5,1061.5 H118.5 C119,1066 122,1068.5 126,1068.5 C128.5,1068.5 130.5,1067.8 132,1067 V1070 C130,1071 128,1071.5 125.5,1071.5 C118,1071.5 114,1066 114,1060 C114,1053 119,1049 124.5,1049 C130,1049 133.5,1053 133.5,1058.5 Z M118.6,1058.3 H128.8 C128.6,1055 126.8,1052.6 123.5,1052.6 C120.5,1052.6 118.8,1055 118.6,1058.3 Z" fill="#1e7de2"/><path d="M114,1058 C115,1052 119,1048.5 124,1048.8 C120,1050 117,1053.5 116,1058 Z" fill="#1e7de2"/><path d="M161,1053 H168 L170,1055 H182.5 V1068.5 H161 Z" fill="#f8d775"/><rect x="161" y="1056" width="21.5" height="12.5" fill="#fbe08a"/><rect x="162" y="1052" width="6" height="2" fill="#e8b848"/><path d="M166,1069 V1063 H177.5 V1069 H174 V1066 H169.5 V1069 Z" fill="#2fa8e8"/><path d="M210,1056 H231 V1071.5 L214,1072 L210,1070 Z" fill="#fff"/><path d="M215,1056 C215,1049 218,1048 220.5,1048 C223,1048 226,1049 226,1056" stroke="#fff" stroke-width="1.3" fill="none"/><rect x="215" y="1059.5" width="4.8" height="4.8" fill="#04060b"/><rect x="221" y="1059.5" width="4.8" height="4.8" fill="#04060b"/><rect x="215" y="1065.3" width="4.8" height="4.5" fill="#04060b"/><rect x="221" y="1065.3" width="4.8" height="4.5" fill="#04060b"/><circle cx="270" cy="1059.8" r="11.2" fill="#c8d4e8"/><circle cx="270" cy="1059.8" r="10" fill="#1f3b7a"/><path d="M270,1069 V1052 M270,1064 L265,1059 V1055 M270,1061 L275,1056 V1053 M270,1058 L266,1054 M265,1059 L262,1057 M275,1056 L278,1058" stroke="#fff" stroke-width="1.3" fill="none"/><circle cx="319" cy="1059.7" r="11" fill="#dd4b39"/><path d="M319,1059.7 L309.5,1065.2 A11,11 0 0 1 309.5,1054.2 Z" fill="#1da462"/><path d="M319,1059.7 L328.5,1054.2 A11,11 0 0 1 319,1070.7 Z" fill="#ffcd46"/><path d="M319,1059.7 L319,1070.7 A11,11 0 0 1 309.5,1065.2 Z" fill="#1da462"/><circle cx="319" cy="1059.7" r="5" fill="#fff"/><circle cx="319" cy="1059.7" r="3.9" fill="#4c8bf5"/><circle cx="368" cy="1059.3" r="11" fill="#c8cad8"/><circle cx="369" cy="1059.3" r="9" fill="#1b1e5a"/><ellipse cx="371" cy="1058" rx="5.5" ry="6" fill="#3c4cb8"/><ellipse cx="372.5" cy="1056.5" rx="2.5" ry="2.5" fill="#8aa0f0"/><rect x="405" y="1048" width="24" height="23.7" fill="#f65e0a"/><polygon points="409,1051 413,1051 414,1056 411,1056" fill="#2a2a2a"/><polygon points="421.5,1051 425.5,1051 422.5,1057" fill="#2a2a2a"/><text x="417" y="1062" text-anchor="middle" font-family="Liberation Sans" font-weight="700" font-size="12" fill="#2a2a2a">5</text><polygon points="414,1064 420,1064 417,1070" fill="#2a2a2a"/><rect x="457" y="1050" width="18" height="17" rx="7" fill="#fff"/><text x="465.5" y="1063" text-anchor="middle" font-family="Liberation Sans" font-weight="700" font-size="11" fill="#2a2a2a">#</text><circle cx="472" cy="1066" r="6.3" fill="#e8505a"/><text x="472" y="1069.8" text-anchor="middle" font-family="Liberation Sans" font-weight="700" font-size="9" fill="#fff">1</text><circle cx="515" cy="1059.7" r="12" fill="#1ed760"/><path d="M508,1056 Q516,1053 523,1057 M508.8,1059.5 Q516,1057 522,1060.5 M509.5,1063 Q515.5,1061 521,1063.8" stroke="#04060b" stroke-width="1.8" fill="none" stroke-linecap="round"/><rect x="540" y="1040" width="48" height="38" fill="#3a3a3d"/><polygon points="553,1048 558,1048 559.5,1055 556,1055" fill="#f65e0a"/><polygon points="569,1048 574,1048 569.5,1057" fill="#f65e0a"/><polygon points="561,1052 569,1051.5 568,1054 561,1054" fill="#f65e0a"/><circle cx="563.5" cy="1059" r="2.8" fill="#f65e0a"/><polygon points="556,1058.5 561,1058 561,1060.5 556.5,1060.8" fill="#f65e0a"/><polygon points="559,1064 568,1064 563.5,1071.5" fill="#f65e0a"/><rect x="152" y="1078" width="40" height="2" fill="#76b9ed"/><rect x="299" y="1078" width="40" height="2" fill="#76b9ed"/><rect x="446" y="1078" width="40" height="2" fill="#76b9ed"/><rect x="495" y="1078" width="40" height="2" fill="#76b9ed"/><rect x="540" y="1078" width="48" height="2" fill="#76b9ed"/><path d="M1733,1064 L1738,1059 L1743,1064" stroke="#fff" stroke-width="1.2" fill="none"/><path d="M1755,1053.5 H1761 V1059 H1755 Z M1758,1059 V1066 H1763" stroke="#fff" stroke-width="1.1" fill="none"/></svg>
</body></html>
